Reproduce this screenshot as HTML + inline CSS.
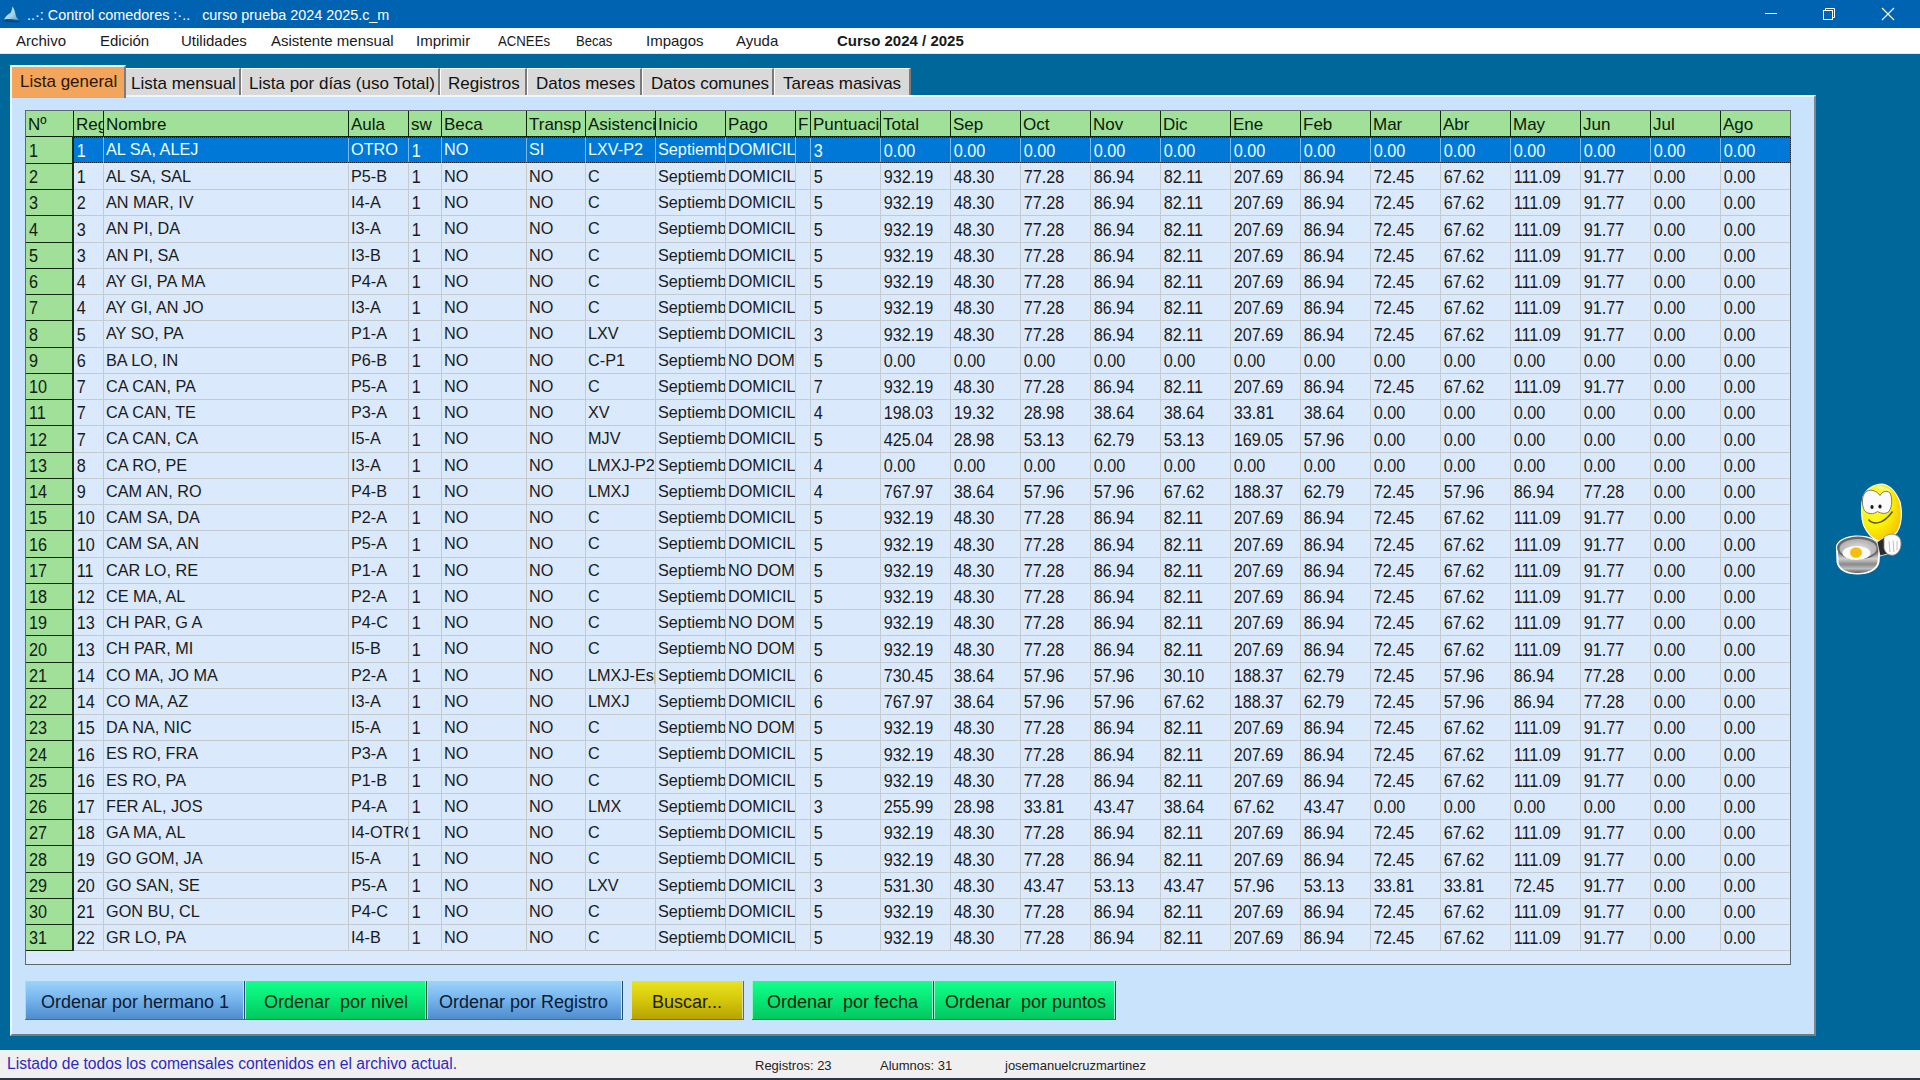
<!DOCTYPE html>
<html><head><meta charset="utf-8">
<style>
html,body{margin:0;padding:0;}
body{width:1920px;height:1080px;overflow:hidden;position:relative;background:#00679B;font-family:"Liberation Sans",sans-serif;}
div{position:absolute;box-sizing:border-box;}
#title{left:0;top:0;width:1920px;height:28px;background:#0063B1;}
#title .t{left:27px;top:5.6px;font-size:14.4px;color:#fff;white-space:pre;line-height:18px;}
#menu{left:0;top:28px;width:1920px;height:26px;background:#fff;border-bottom:1px solid #e6e6e6;}
.mi{top:4px;font-size:15px;line-height:17px;color:#1a1a1a;white-space:pre;}
#panel{left:10px;top:95px;width:1806px;height:941px;background:#C9E3FC;border-left:2px solid #eef6fd;border-top:2px solid #eef6fd;border-right:2px solid #7b8790;border-bottom:2px solid #707c86;}
.tab{top:68px;height:27px;background:#D9D9D9;border-top:1px solid #fff;border-left:1px solid #fff;border-right:2px solid #7a7a7a;font-size:17px;line-height:29px;color:#111;white-space:pre;}
.tabsel{left:10px;top:65px;width:116px;height:33px;background:#F3A65B;border-top:2px solid #eaf4fc;border-left:2px solid #eaf4fc;border-right:2px solid #7c7c7c;font-size:17px;color:#2a1500;white-space:pre;}
#grid{left:25px;top:110px;width:1766px;height:855px;background:#DAE9FB;border:1px solid #5f6a70;}
.hdr{background:#A0E098;}
.ht{font-size:17px;color:#0a1a0a;padding-left:2px;padding-top:1px;overflow:hidden;white-space:nowrap;}
.hv{width:1px;background:#0f2a10;}
.hl{height:1px;background:#0d1f0d;}
.fc{left:26px;width:47px;background:#A0E098;font-size:17px;color:#102010;padding-left:3px;white-space:nowrap;}
.fl{left:26px;width:47px;height:1px;background:#142a14;}
.fv{width:2px;background:#1b2e1b;}
.gl{left:74px;width:1716px;height:1px;background:#C5CACF;}
.gv{width:1px;background:#C5CACF;}
.bv{width:1px;background:#5f6a70;}
.sv{width:1px;background:#7DB8EE;}
.selbg{left:74px;width:1716px;background:#0078D7;}
.c{font-size:17px;color:#1b1b1b;padding-left:2px;overflow:hidden;white-space:nowrap;}
.c.s{color:#eaffff;}
.tx{display:inline-block;transform:scaleX(0.955);transform-origin:0 0;}
.c.n{font-size:18px;transform:scaleX(0.9);transform-origin:0 0;padding-left:3px;padding-top:1px;}
.fn{display:inline-block;font-size:18px;transform:scaleX(0.9);transform-origin:0 0;position:relative;top:1px;}
.focus{border:1px dotted #1a1a1a;}
.btn{top:981px;height:39px;font-size:18px;line-height:43px;white-space:pre;color:#0b1a33;}
.bb{background:linear-gradient(#9dd3fc,#74b3ec 50%,#4f8ccd);border-right:1px solid #1f4e6e;border-bottom:1px solid #3f6f9c;box-shadow:inset -1px 0 #bfe6ff,inset 1px 0 #a9d8fb;}
.bg{background:linear-gradient(#14ff8c,#08ea78 45%,#04c75e);border-right:1px solid #1c5a3c;border-bottom:1px solid #0a9a48;box-shadow:inset -1px 0 #9dffd2,inset 1px 0 #8ff8c4;color:#052a10;}
.by{background:linear-gradient(#e9e31e,#d5c80c 50%,#b5a302);border-right:1px solid #6f6a40;border-bottom:1px solid #8a7a00;box-shadow:inset -1px 0 #dcdca8,inset 1px 0 #f0ea70;color:#1e1c00;}
#status{left:0;top:1050px;width:1920px;height:28px;background:#F0F0F0;}
#sbot{left:0;top:1078px;width:1920px;height:2px;background:#2a3641;}
.st{top:1055px;font-size:16px;line-height:18px;white-space:pre;transform:scaleX(0.977);transform-origin:0 0;}
.st2{top:1058px;font-size:13px;line-height:16px;white-space:pre;color:#222;}
</style></head><body>
<div id="title">
  <svg style="position:absolute;left:0;top:0" width="28" height="28" viewBox="0 0 28 28">
    <defs><linearGradient id="ig" x1="0" y1="0" x2="1" y2="1"><stop offset="0" stop-color="#d8f0fa"/><stop offset="0.55" stop-color="#a6d4e8"/><stop offset="1" stop-color="#5e9cb8"/></linearGradient></defs>
    <path d="M4 20 C5.5 21 12 21.5 19.5 21.5" stroke="#0a3f78" stroke-width="1.6" fill="none" opacity="0.8"/>
    <path d="M4 19.5 C5.5 16 8 14.2 10.5 13 C11.8 11 12 8.5 12.5 6.5 C14.2 8.2 15 12 15.8 15.5 C16.6 18 18 19.5 19.5 20.5 C15 19.2 9.5 18.6 4 19.5 Z" fill="url(#ig)"/>
  </svg>
  <div class="t">..·: Control comedores :·..   curso prueba 2024 2025.c_m</div>
  <svg style="position:absolute;left:1760px;top:0" width="160" height="28" viewBox="0 0 160 28">
    <rect x="5" y="13" width="12" height="1" fill="#fff"/>
    <rect x="63.5" y="10.5" width="9" height="9" fill="none" stroke="#fff" stroke-width="1"/>
    <path d="M65.5 10.5 V8.5 H74.5 V17.5 H72.5" fill="none" stroke="#fff" stroke-width="1"/>
    <path d="M122 8 L134 20 M134 8 L122 20" stroke="#fff" stroke-width="1.1"/>
  </svg>
</div>
<div id="menu">
  <div class="mi" style="left:16px">Archivo</div>
  <div class="mi" style="left:100px">Edición</div>
  <div class="mi" style="left:181px">Utilidades</div>
  <div class="mi" style="left:271px">Asistente mensual</div>
  <div class="mi" style="left:416px">Imprimir</div>
  <div class="mi" style="left:498px;transform:scaleX(0.88);transform-origin:0 0">ACNEEs</div>
  <div class="mi" style="left:576px;transform:scaleX(0.87);transform-origin:0 0">Becas</div>
  <div class="mi" style="left:646px">Impagos</div>
  <div class="mi" style="left:736px">Ayuda</div>
  <div class="mi" style="left:837px;font-weight:bold">Curso 2024 / 2025</div>
</div>
<div id="panel"></div>
<div class="tab" style="left:125px;width:116px"><span style="position:absolute;left:5px;top:0">Lista mensual</span></div>
<div class="tab" style="left:241px;width:199px"><span style="position:absolute;left:7px;top:0">Lista por días (uso Total)</span></div>
<div class="tab" style="left:440px;width:87px"><span style="position:absolute;left:7px;top:0">Registros</span></div>
<div class="tab" style="left:527px;width:115px"><span style="position:absolute;left:8px;top:0">Datos meses</span></div>
<div class="tab" style="left:642px;width:132px"><span style="position:absolute;left:8px;top:0">Datos comunes</span></div>
<div class="tab" style="left:774px;width:137px"><span style="position:absolute;left:8px;top:0">Tareas masivas</span></div>
<div class="tabsel"><span style="position:absolute;left:8px;top:3px;line-height:24px">Lista general</span></div>
<div id="grid"></div>
<div class="hdr" style="top:111px;height:25px;left:26px;width:1764px"></div>
<div class="ht" style="left:26px;top:111px;width:47px;height:25px;line-height:25px">Nº</div>
<div class="ht" style="left:74px;top:111px;width:29px;height:25px;line-height:25px">Registro</div>
<div class="hv" style="left:73px;top:111px;height:26px"></div>
<div class="ht" style="left:104px;top:111px;width:244px;height:25px;line-height:25px">Nombre</div>
<div class="hv" style="left:103px;top:111px;height:26px"></div>
<div class="ht" style="left:349px;top:111px;width:59px;height:25px;line-height:25px">Aula</div>
<div class="hv" style="left:348px;top:111px;height:26px"></div>
<div class="ht" style="left:409px;top:111px;width:32px;height:25px;line-height:25px">sw</div>
<div class="hv" style="left:408px;top:111px;height:26px"></div>
<div class="ht" style="left:442px;top:111px;width:84px;height:25px;line-height:25px">Beca</div>
<div class="hv" style="left:441px;top:111px;height:26px"></div>
<div class="ht" style="left:527px;top:111px;width:58px;height:25px;line-height:25px">Transp</div>
<div class="hv" style="left:526px;top:111px;height:26px"></div>
<div class="ht" style="left:586px;top:111px;width:69px;height:25px;line-height:25px">Asistencia</div>
<div class="hv" style="left:585px;top:111px;height:26px"></div>
<div class="ht" style="left:656px;top:111px;width:69px;height:25px;line-height:25px">Inicio</div>
<div class="hv" style="left:655px;top:111px;height:26px"></div>
<div class="ht" style="left:726px;top:111px;width:69px;height:25px;line-height:25px">Pago</div>
<div class="hv" style="left:725px;top:111px;height:26px"></div>
<div class="ht" style="left:796px;top:111px;width:14px;height:25px;line-height:25px">F</div>
<div class="hv" style="left:795px;top:111px;height:26px"></div>
<div class="ht" style="left:811px;top:111px;width:69px;height:25px;line-height:25px">Puntuacion</div>
<div class="hv" style="left:810px;top:111px;height:26px"></div>
<div class="ht" style="left:881px;top:111px;width:69px;height:25px;line-height:25px">Total</div>
<div class="hv" style="left:880px;top:111px;height:26px"></div>
<div class="ht" style="left:951px;top:111px;width:69px;height:25px;line-height:25px">Sep</div>
<div class="hv" style="left:950px;top:111px;height:26px"></div>
<div class="ht" style="left:1021px;top:111px;width:69px;height:25px;line-height:25px">Oct</div>
<div class="hv" style="left:1020px;top:111px;height:26px"></div>
<div class="ht" style="left:1091px;top:111px;width:69px;height:25px;line-height:25px">Nov</div>
<div class="hv" style="left:1090px;top:111px;height:26px"></div>
<div class="ht" style="left:1161px;top:111px;width:69px;height:25px;line-height:25px">Dic</div>
<div class="hv" style="left:1160px;top:111px;height:26px"></div>
<div class="ht" style="left:1231px;top:111px;width:69px;height:25px;line-height:25px">Ene</div>
<div class="hv" style="left:1230px;top:111px;height:26px"></div>
<div class="ht" style="left:1301px;top:111px;width:69px;height:25px;line-height:25px">Feb</div>
<div class="hv" style="left:1300px;top:111px;height:26px"></div>
<div class="ht" style="left:1371px;top:111px;width:69px;height:25px;line-height:25px">Mar</div>
<div class="hv" style="left:1370px;top:111px;height:26px"></div>
<div class="ht" style="left:1441px;top:111px;width:69px;height:25px;line-height:25px">Abr</div>
<div class="hv" style="left:1440px;top:111px;height:26px"></div>
<div class="ht" style="left:1511px;top:111px;width:69px;height:25px;line-height:25px">May</div>
<div class="hv" style="left:1510px;top:111px;height:26px"></div>
<div class="ht" style="left:1581px;top:111px;width:69px;height:25px;line-height:25px">Jun</div>
<div class="hv" style="left:1580px;top:111px;height:26px"></div>
<div class="ht" style="left:1651px;top:111px;width:69px;height:25px;line-height:25px">Jul</div>
<div class="hv" style="left:1650px;top:111px;height:26px"></div>
<div class="ht" style="left:1721px;top:111px;width:69px;height:25px;line-height:25px">Ago</div>
<div class="hv" style="left:1720px;top:111px;height:26px"></div>
<div class="hl" style="left:26px;top:136px;width:1764px"></div>
<div class="fc" style="top:137px;height:26px;line-height:26px"><span class="fn">1</span></div>
<div class="fl" style="top:163px"></div>
<div class="selbg" style="top:137px;height:26px"></div>
<div class="c s n" style="left:74px;top:137px;width:29px;height:26px;line-height:26px">1</div>
<div class="c s" style="left:104px;top:137px;width:244px;height:26px;line-height:26px"><span class="tx">AL SA, ALEJ</span></div>
<div class="c s" style="left:349px;top:137px;width:59px;height:26px;line-height:26px"><span class="tx">OTRO</span></div>
<div class="c s n" style="left:409px;top:137px;width:32px;height:26px;line-height:26px">1</div>
<div class="c s" style="left:442px;top:137px;width:84px;height:26px;line-height:26px"><span class="tx">NO</span></div>
<div class="c s" style="left:527px;top:137px;width:58px;height:26px;line-height:26px"><span class="tx">SI</span></div>
<div class="c s" style="left:586px;top:137px;width:69px;height:26px;line-height:26px"><span class="tx">LXV-P2</span></div>
<div class="c s" style="left:656px;top:137px;width:69px;height:26px;line-height:26px"><span class="tx">Septiembre</span></div>
<div class="c s" style="left:726px;top:137px;width:69px;height:26px;line-height:26px"><span class="tx">DOMICILIADO</span></div>
<div class="c s n" style="left:811px;top:137px;width:69px;height:26px;line-height:26px">3</div>
<div class="c s n" style="left:881px;top:137px;width:69px;height:26px;line-height:26px">0.00</div>
<div class="c s n" style="left:951px;top:137px;width:69px;height:26px;line-height:26px">0.00</div>
<div class="c s n" style="left:1021px;top:137px;width:69px;height:26px;line-height:26px">0.00</div>
<div class="c s n" style="left:1091px;top:137px;width:69px;height:26px;line-height:26px">0.00</div>
<div class="c s n" style="left:1161px;top:137px;width:69px;height:26px;line-height:26px">0.00</div>
<div class="c s n" style="left:1231px;top:137px;width:69px;height:26px;line-height:26px">0.00</div>
<div class="c s n" style="left:1301px;top:137px;width:69px;height:26px;line-height:26px">0.00</div>
<div class="c s n" style="left:1371px;top:137px;width:69px;height:26px;line-height:26px">0.00</div>
<div class="c s n" style="left:1441px;top:137px;width:69px;height:26px;line-height:26px">0.00</div>
<div class="c s n" style="left:1511px;top:137px;width:69px;height:26px;line-height:26px">0.00</div>
<div class="c s n" style="left:1581px;top:137px;width:69px;height:26px;line-height:26px">0.00</div>
<div class="c s n" style="left:1651px;top:137px;width:69px;height:26px;line-height:26px">0.00</div>
<div class="c s n" style="left:1721px;top:137px;width:69px;height:26px;line-height:26px">0.00</div>
<div class="fc" style="top:164px;height:25px;line-height:25px"><span class="fn">2</span></div>
<div class="fl" style="top:189px"></div>
<div class="gl" style="top:189px"></div>
<div class="c n" style="left:74px;top:164px;width:29px;height:25px;line-height:25px">1</div>
<div class="c" style="left:104px;top:164px;width:244px;height:25px;line-height:25px"><span class="tx">AL SA, SAL</span></div>
<div class="c" style="left:349px;top:164px;width:59px;height:25px;line-height:25px"><span class="tx">P5-B</span></div>
<div class="c n" style="left:409px;top:164px;width:32px;height:25px;line-height:25px">1</div>
<div class="c" style="left:442px;top:164px;width:84px;height:25px;line-height:25px"><span class="tx">NO</span></div>
<div class="c" style="left:527px;top:164px;width:58px;height:25px;line-height:25px"><span class="tx">NO</span></div>
<div class="c" style="left:586px;top:164px;width:69px;height:25px;line-height:25px"><span class="tx">C</span></div>
<div class="c" style="left:656px;top:164px;width:69px;height:25px;line-height:25px"><span class="tx">Septiembre</span></div>
<div class="c" style="left:726px;top:164px;width:69px;height:25px;line-height:25px"><span class="tx">DOMICILIADO</span></div>
<div class="c n" style="left:811px;top:164px;width:69px;height:25px;line-height:25px">5</div>
<div class="c n" style="left:881px;top:164px;width:69px;height:25px;line-height:25px">932.19</div>
<div class="c n" style="left:951px;top:164px;width:69px;height:25px;line-height:25px">48.30</div>
<div class="c n" style="left:1021px;top:164px;width:69px;height:25px;line-height:25px">77.28</div>
<div class="c n" style="left:1091px;top:164px;width:69px;height:25px;line-height:25px">86.94</div>
<div class="c n" style="left:1161px;top:164px;width:69px;height:25px;line-height:25px">82.11</div>
<div class="c n" style="left:1231px;top:164px;width:69px;height:25px;line-height:25px">207.69</div>
<div class="c n" style="left:1301px;top:164px;width:69px;height:25px;line-height:25px">86.94</div>
<div class="c n" style="left:1371px;top:164px;width:69px;height:25px;line-height:25px">72.45</div>
<div class="c n" style="left:1441px;top:164px;width:69px;height:25px;line-height:25px">67.62</div>
<div class="c n" style="left:1511px;top:164px;width:69px;height:25px;line-height:25px">111.09</div>
<div class="c n" style="left:1581px;top:164px;width:69px;height:25px;line-height:25px">91.77</div>
<div class="c n" style="left:1651px;top:164px;width:69px;height:25px;line-height:25px">0.00</div>
<div class="c n" style="left:1721px;top:164px;width:69px;height:25px;line-height:25px">0.00</div>
<div class="fc" style="top:190px;height:25px;line-height:25px"><span class="fn">3</span></div>
<div class="fl" style="top:215px"></div>
<div class="gl" style="top:215px"></div>
<div class="c n" style="left:74px;top:190px;width:29px;height:25px;line-height:25px">2</div>
<div class="c" style="left:104px;top:190px;width:244px;height:25px;line-height:25px"><span class="tx">AN MAR, IV</span></div>
<div class="c" style="left:349px;top:190px;width:59px;height:25px;line-height:25px"><span class="tx">I4-A</span></div>
<div class="c n" style="left:409px;top:190px;width:32px;height:25px;line-height:25px">1</div>
<div class="c" style="left:442px;top:190px;width:84px;height:25px;line-height:25px"><span class="tx">NO</span></div>
<div class="c" style="left:527px;top:190px;width:58px;height:25px;line-height:25px"><span class="tx">NO</span></div>
<div class="c" style="left:586px;top:190px;width:69px;height:25px;line-height:25px"><span class="tx">C</span></div>
<div class="c" style="left:656px;top:190px;width:69px;height:25px;line-height:25px"><span class="tx">Septiembre</span></div>
<div class="c" style="left:726px;top:190px;width:69px;height:25px;line-height:25px"><span class="tx">DOMICILIADO</span></div>
<div class="c n" style="left:811px;top:190px;width:69px;height:25px;line-height:25px">5</div>
<div class="c n" style="left:881px;top:190px;width:69px;height:25px;line-height:25px">932.19</div>
<div class="c n" style="left:951px;top:190px;width:69px;height:25px;line-height:25px">48.30</div>
<div class="c n" style="left:1021px;top:190px;width:69px;height:25px;line-height:25px">77.28</div>
<div class="c n" style="left:1091px;top:190px;width:69px;height:25px;line-height:25px">86.94</div>
<div class="c n" style="left:1161px;top:190px;width:69px;height:25px;line-height:25px">82.11</div>
<div class="c n" style="left:1231px;top:190px;width:69px;height:25px;line-height:25px">207.69</div>
<div class="c n" style="left:1301px;top:190px;width:69px;height:25px;line-height:25px">86.94</div>
<div class="c n" style="left:1371px;top:190px;width:69px;height:25px;line-height:25px">72.45</div>
<div class="c n" style="left:1441px;top:190px;width:69px;height:25px;line-height:25px">67.62</div>
<div class="c n" style="left:1511px;top:190px;width:69px;height:25px;line-height:25px">111.09</div>
<div class="c n" style="left:1581px;top:190px;width:69px;height:25px;line-height:25px">91.77</div>
<div class="c n" style="left:1651px;top:190px;width:69px;height:25px;line-height:25px">0.00</div>
<div class="c n" style="left:1721px;top:190px;width:69px;height:25px;line-height:25px">0.00</div>
<div class="fc" style="top:216px;height:26px;line-height:26px"><span class="fn">4</span></div>
<div class="fl" style="top:242px"></div>
<div class="gl" style="top:242px"></div>
<div class="c n" style="left:74px;top:216px;width:29px;height:26px;line-height:26px">3</div>
<div class="c" style="left:104px;top:216px;width:244px;height:26px;line-height:26px"><span class="tx">AN PI, DA</span></div>
<div class="c" style="left:349px;top:216px;width:59px;height:26px;line-height:26px"><span class="tx">I3-A</span></div>
<div class="c n" style="left:409px;top:216px;width:32px;height:26px;line-height:26px">1</div>
<div class="c" style="left:442px;top:216px;width:84px;height:26px;line-height:26px"><span class="tx">NO</span></div>
<div class="c" style="left:527px;top:216px;width:58px;height:26px;line-height:26px"><span class="tx">NO</span></div>
<div class="c" style="left:586px;top:216px;width:69px;height:26px;line-height:26px"><span class="tx">C</span></div>
<div class="c" style="left:656px;top:216px;width:69px;height:26px;line-height:26px"><span class="tx">Septiembre</span></div>
<div class="c" style="left:726px;top:216px;width:69px;height:26px;line-height:26px"><span class="tx">DOMICILIADO</span></div>
<div class="c n" style="left:811px;top:216px;width:69px;height:26px;line-height:26px">5</div>
<div class="c n" style="left:881px;top:216px;width:69px;height:26px;line-height:26px">932.19</div>
<div class="c n" style="left:951px;top:216px;width:69px;height:26px;line-height:26px">48.30</div>
<div class="c n" style="left:1021px;top:216px;width:69px;height:26px;line-height:26px">77.28</div>
<div class="c n" style="left:1091px;top:216px;width:69px;height:26px;line-height:26px">86.94</div>
<div class="c n" style="left:1161px;top:216px;width:69px;height:26px;line-height:26px">82.11</div>
<div class="c n" style="left:1231px;top:216px;width:69px;height:26px;line-height:26px">207.69</div>
<div class="c n" style="left:1301px;top:216px;width:69px;height:26px;line-height:26px">86.94</div>
<div class="c n" style="left:1371px;top:216px;width:69px;height:26px;line-height:26px">72.45</div>
<div class="c n" style="left:1441px;top:216px;width:69px;height:26px;line-height:26px">67.62</div>
<div class="c n" style="left:1511px;top:216px;width:69px;height:26px;line-height:26px">111.09</div>
<div class="c n" style="left:1581px;top:216px;width:69px;height:26px;line-height:26px">91.77</div>
<div class="c n" style="left:1651px;top:216px;width:69px;height:26px;line-height:26px">0.00</div>
<div class="c n" style="left:1721px;top:216px;width:69px;height:26px;line-height:26px">0.00</div>
<div class="fc" style="top:243px;height:25px;line-height:25px"><span class="fn">5</span></div>
<div class="fl" style="top:268px"></div>
<div class="gl" style="top:268px"></div>
<div class="c n" style="left:74px;top:243px;width:29px;height:25px;line-height:25px">3</div>
<div class="c" style="left:104px;top:243px;width:244px;height:25px;line-height:25px"><span class="tx">AN PI, SA</span></div>
<div class="c" style="left:349px;top:243px;width:59px;height:25px;line-height:25px"><span class="tx">I3-B</span></div>
<div class="c n" style="left:409px;top:243px;width:32px;height:25px;line-height:25px">1</div>
<div class="c" style="left:442px;top:243px;width:84px;height:25px;line-height:25px"><span class="tx">NO</span></div>
<div class="c" style="left:527px;top:243px;width:58px;height:25px;line-height:25px"><span class="tx">NO</span></div>
<div class="c" style="left:586px;top:243px;width:69px;height:25px;line-height:25px"><span class="tx">C</span></div>
<div class="c" style="left:656px;top:243px;width:69px;height:25px;line-height:25px"><span class="tx">Septiembre</span></div>
<div class="c" style="left:726px;top:243px;width:69px;height:25px;line-height:25px"><span class="tx">DOMICILIADO</span></div>
<div class="c n" style="left:811px;top:243px;width:69px;height:25px;line-height:25px">5</div>
<div class="c n" style="left:881px;top:243px;width:69px;height:25px;line-height:25px">932.19</div>
<div class="c n" style="left:951px;top:243px;width:69px;height:25px;line-height:25px">48.30</div>
<div class="c n" style="left:1021px;top:243px;width:69px;height:25px;line-height:25px">77.28</div>
<div class="c n" style="left:1091px;top:243px;width:69px;height:25px;line-height:25px">86.94</div>
<div class="c n" style="left:1161px;top:243px;width:69px;height:25px;line-height:25px">82.11</div>
<div class="c n" style="left:1231px;top:243px;width:69px;height:25px;line-height:25px">207.69</div>
<div class="c n" style="left:1301px;top:243px;width:69px;height:25px;line-height:25px">86.94</div>
<div class="c n" style="left:1371px;top:243px;width:69px;height:25px;line-height:25px">72.45</div>
<div class="c n" style="left:1441px;top:243px;width:69px;height:25px;line-height:25px">67.62</div>
<div class="c n" style="left:1511px;top:243px;width:69px;height:25px;line-height:25px">111.09</div>
<div class="c n" style="left:1581px;top:243px;width:69px;height:25px;line-height:25px">91.77</div>
<div class="c n" style="left:1651px;top:243px;width:69px;height:25px;line-height:25px">0.00</div>
<div class="c n" style="left:1721px;top:243px;width:69px;height:25px;line-height:25px">0.00</div>
<div class="fc" style="top:269px;height:25px;line-height:25px"><span class="fn">6</span></div>
<div class="fl" style="top:294px"></div>
<div class="gl" style="top:294px"></div>
<div class="c n" style="left:74px;top:269px;width:29px;height:25px;line-height:25px">4</div>
<div class="c" style="left:104px;top:269px;width:244px;height:25px;line-height:25px"><span class="tx">AY GI, PA MA</span></div>
<div class="c" style="left:349px;top:269px;width:59px;height:25px;line-height:25px"><span class="tx">P4-A</span></div>
<div class="c n" style="left:409px;top:269px;width:32px;height:25px;line-height:25px">1</div>
<div class="c" style="left:442px;top:269px;width:84px;height:25px;line-height:25px"><span class="tx">NO</span></div>
<div class="c" style="left:527px;top:269px;width:58px;height:25px;line-height:25px"><span class="tx">NO</span></div>
<div class="c" style="left:586px;top:269px;width:69px;height:25px;line-height:25px"><span class="tx">C</span></div>
<div class="c" style="left:656px;top:269px;width:69px;height:25px;line-height:25px"><span class="tx">Septiembre</span></div>
<div class="c" style="left:726px;top:269px;width:69px;height:25px;line-height:25px"><span class="tx">DOMICILIADO</span></div>
<div class="c n" style="left:811px;top:269px;width:69px;height:25px;line-height:25px">5</div>
<div class="c n" style="left:881px;top:269px;width:69px;height:25px;line-height:25px">932.19</div>
<div class="c n" style="left:951px;top:269px;width:69px;height:25px;line-height:25px">48.30</div>
<div class="c n" style="left:1021px;top:269px;width:69px;height:25px;line-height:25px">77.28</div>
<div class="c n" style="left:1091px;top:269px;width:69px;height:25px;line-height:25px">86.94</div>
<div class="c n" style="left:1161px;top:269px;width:69px;height:25px;line-height:25px">82.11</div>
<div class="c n" style="left:1231px;top:269px;width:69px;height:25px;line-height:25px">207.69</div>
<div class="c n" style="left:1301px;top:269px;width:69px;height:25px;line-height:25px">86.94</div>
<div class="c n" style="left:1371px;top:269px;width:69px;height:25px;line-height:25px">72.45</div>
<div class="c n" style="left:1441px;top:269px;width:69px;height:25px;line-height:25px">67.62</div>
<div class="c n" style="left:1511px;top:269px;width:69px;height:25px;line-height:25px">111.09</div>
<div class="c n" style="left:1581px;top:269px;width:69px;height:25px;line-height:25px">91.77</div>
<div class="c n" style="left:1651px;top:269px;width:69px;height:25px;line-height:25px">0.00</div>
<div class="c n" style="left:1721px;top:269px;width:69px;height:25px;line-height:25px">0.00</div>
<div class="fc" style="top:295px;height:25px;line-height:25px"><span class="fn">7</span></div>
<div class="fl" style="top:320px"></div>
<div class="gl" style="top:320px"></div>
<div class="c n" style="left:74px;top:295px;width:29px;height:25px;line-height:25px">4</div>
<div class="c" style="left:104px;top:295px;width:244px;height:25px;line-height:25px"><span class="tx">AY GI, AN JO</span></div>
<div class="c" style="left:349px;top:295px;width:59px;height:25px;line-height:25px"><span class="tx">I3-A</span></div>
<div class="c n" style="left:409px;top:295px;width:32px;height:25px;line-height:25px">1</div>
<div class="c" style="left:442px;top:295px;width:84px;height:25px;line-height:25px"><span class="tx">NO</span></div>
<div class="c" style="left:527px;top:295px;width:58px;height:25px;line-height:25px"><span class="tx">NO</span></div>
<div class="c" style="left:586px;top:295px;width:69px;height:25px;line-height:25px"><span class="tx">C</span></div>
<div class="c" style="left:656px;top:295px;width:69px;height:25px;line-height:25px"><span class="tx">Septiembre</span></div>
<div class="c" style="left:726px;top:295px;width:69px;height:25px;line-height:25px"><span class="tx">DOMICILIADO</span></div>
<div class="c n" style="left:811px;top:295px;width:69px;height:25px;line-height:25px">5</div>
<div class="c n" style="left:881px;top:295px;width:69px;height:25px;line-height:25px">932.19</div>
<div class="c n" style="left:951px;top:295px;width:69px;height:25px;line-height:25px">48.30</div>
<div class="c n" style="left:1021px;top:295px;width:69px;height:25px;line-height:25px">77.28</div>
<div class="c n" style="left:1091px;top:295px;width:69px;height:25px;line-height:25px">86.94</div>
<div class="c n" style="left:1161px;top:295px;width:69px;height:25px;line-height:25px">82.11</div>
<div class="c n" style="left:1231px;top:295px;width:69px;height:25px;line-height:25px">207.69</div>
<div class="c n" style="left:1301px;top:295px;width:69px;height:25px;line-height:25px">86.94</div>
<div class="c n" style="left:1371px;top:295px;width:69px;height:25px;line-height:25px">72.45</div>
<div class="c n" style="left:1441px;top:295px;width:69px;height:25px;line-height:25px">67.62</div>
<div class="c n" style="left:1511px;top:295px;width:69px;height:25px;line-height:25px">111.09</div>
<div class="c n" style="left:1581px;top:295px;width:69px;height:25px;line-height:25px">91.77</div>
<div class="c n" style="left:1651px;top:295px;width:69px;height:25px;line-height:25px">0.00</div>
<div class="c n" style="left:1721px;top:295px;width:69px;height:25px;line-height:25px">0.00</div>
<div class="fc" style="top:321px;height:26px;line-height:26px"><span class="fn">8</span></div>
<div class="fl" style="top:347px"></div>
<div class="gl" style="top:347px"></div>
<div class="c n" style="left:74px;top:321px;width:29px;height:26px;line-height:26px">5</div>
<div class="c" style="left:104px;top:321px;width:244px;height:26px;line-height:26px"><span class="tx">AY SO, PA</span></div>
<div class="c" style="left:349px;top:321px;width:59px;height:26px;line-height:26px"><span class="tx">P1-A</span></div>
<div class="c n" style="left:409px;top:321px;width:32px;height:26px;line-height:26px">1</div>
<div class="c" style="left:442px;top:321px;width:84px;height:26px;line-height:26px"><span class="tx">NO</span></div>
<div class="c" style="left:527px;top:321px;width:58px;height:26px;line-height:26px"><span class="tx">NO</span></div>
<div class="c" style="left:586px;top:321px;width:69px;height:26px;line-height:26px"><span class="tx">LXV</span></div>
<div class="c" style="left:656px;top:321px;width:69px;height:26px;line-height:26px"><span class="tx">Septiembre</span></div>
<div class="c" style="left:726px;top:321px;width:69px;height:26px;line-height:26px"><span class="tx">DOMICILIADO</span></div>
<div class="c n" style="left:811px;top:321px;width:69px;height:26px;line-height:26px">3</div>
<div class="c n" style="left:881px;top:321px;width:69px;height:26px;line-height:26px">932.19</div>
<div class="c n" style="left:951px;top:321px;width:69px;height:26px;line-height:26px">48.30</div>
<div class="c n" style="left:1021px;top:321px;width:69px;height:26px;line-height:26px">77.28</div>
<div class="c n" style="left:1091px;top:321px;width:69px;height:26px;line-height:26px">86.94</div>
<div class="c n" style="left:1161px;top:321px;width:69px;height:26px;line-height:26px">82.11</div>
<div class="c n" style="left:1231px;top:321px;width:69px;height:26px;line-height:26px">207.69</div>
<div class="c n" style="left:1301px;top:321px;width:69px;height:26px;line-height:26px">86.94</div>
<div class="c n" style="left:1371px;top:321px;width:69px;height:26px;line-height:26px">72.45</div>
<div class="c n" style="left:1441px;top:321px;width:69px;height:26px;line-height:26px">67.62</div>
<div class="c n" style="left:1511px;top:321px;width:69px;height:26px;line-height:26px">111.09</div>
<div class="c n" style="left:1581px;top:321px;width:69px;height:26px;line-height:26px">91.77</div>
<div class="c n" style="left:1651px;top:321px;width:69px;height:26px;line-height:26px">0.00</div>
<div class="c n" style="left:1721px;top:321px;width:69px;height:26px;line-height:26px">0.00</div>
<div class="fc" style="top:348px;height:25px;line-height:25px"><span class="fn">9</span></div>
<div class="fl" style="top:373px"></div>
<div class="gl" style="top:373px"></div>
<div class="c n" style="left:74px;top:348px;width:29px;height:25px;line-height:25px">6</div>
<div class="c" style="left:104px;top:348px;width:244px;height:25px;line-height:25px"><span class="tx">BA LO, IN</span></div>
<div class="c" style="left:349px;top:348px;width:59px;height:25px;line-height:25px"><span class="tx">P6-B</span></div>
<div class="c n" style="left:409px;top:348px;width:32px;height:25px;line-height:25px">1</div>
<div class="c" style="left:442px;top:348px;width:84px;height:25px;line-height:25px"><span class="tx">NO</span></div>
<div class="c" style="left:527px;top:348px;width:58px;height:25px;line-height:25px"><span class="tx">NO</span></div>
<div class="c" style="left:586px;top:348px;width:69px;height:25px;line-height:25px"><span class="tx">C-P1</span></div>
<div class="c" style="left:656px;top:348px;width:69px;height:25px;line-height:25px"><span class="tx">Septiembre</span></div>
<div class="c" style="left:726px;top:348px;width:69px;height:25px;line-height:25px"><span class="tx">NO DOMICILIADO</span></div>
<div class="c n" style="left:811px;top:348px;width:69px;height:25px;line-height:25px">5</div>
<div class="c n" style="left:881px;top:348px;width:69px;height:25px;line-height:25px">0.00</div>
<div class="c n" style="left:951px;top:348px;width:69px;height:25px;line-height:25px">0.00</div>
<div class="c n" style="left:1021px;top:348px;width:69px;height:25px;line-height:25px">0.00</div>
<div class="c n" style="left:1091px;top:348px;width:69px;height:25px;line-height:25px">0.00</div>
<div class="c n" style="left:1161px;top:348px;width:69px;height:25px;line-height:25px">0.00</div>
<div class="c n" style="left:1231px;top:348px;width:69px;height:25px;line-height:25px">0.00</div>
<div class="c n" style="left:1301px;top:348px;width:69px;height:25px;line-height:25px">0.00</div>
<div class="c n" style="left:1371px;top:348px;width:69px;height:25px;line-height:25px">0.00</div>
<div class="c n" style="left:1441px;top:348px;width:69px;height:25px;line-height:25px">0.00</div>
<div class="c n" style="left:1511px;top:348px;width:69px;height:25px;line-height:25px">0.00</div>
<div class="c n" style="left:1581px;top:348px;width:69px;height:25px;line-height:25px">0.00</div>
<div class="c n" style="left:1651px;top:348px;width:69px;height:25px;line-height:25px">0.00</div>
<div class="c n" style="left:1721px;top:348px;width:69px;height:25px;line-height:25px">0.00</div>
<div class="fc" style="top:374px;height:25px;line-height:25px"><span class="fn">10</span></div>
<div class="fl" style="top:399px"></div>
<div class="gl" style="top:399px"></div>
<div class="c n" style="left:74px;top:374px;width:29px;height:25px;line-height:25px">7</div>
<div class="c" style="left:104px;top:374px;width:244px;height:25px;line-height:25px"><span class="tx">CA CAN, PA</span></div>
<div class="c" style="left:349px;top:374px;width:59px;height:25px;line-height:25px"><span class="tx">P5-A</span></div>
<div class="c n" style="left:409px;top:374px;width:32px;height:25px;line-height:25px">1</div>
<div class="c" style="left:442px;top:374px;width:84px;height:25px;line-height:25px"><span class="tx">NO</span></div>
<div class="c" style="left:527px;top:374px;width:58px;height:25px;line-height:25px"><span class="tx">NO</span></div>
<div class="c" style="left:586px;top:374px;width:69px;height:25px;line-height:25px"><span class="tx">C</span></div>
<div class="c" style="left:656px;top:374px;width:69px;height:25px;line-height:25px"><span class="tx">Septiembre</span></div>
<div class="c" style="left:726px;top:374px;width:69px;height:25px;line-height:25px"><span class="tx">DOMICILIADO</span></div>
<div class="c n" style="left:811px;top:374px;width:69px;height:25px;line-height:25px">7</div>
<div class="c n" style="left:881px;top:374px;width:69px;height:25px;line-height:25px">932.19</div>
<div class="c n" style="left:951px;top:374px;width:69px;height:25px;line-height:25px">48.30</div>
<div class="c n" style="left:1021px;top:374px;width:69px;height:25px;line-height:25px">77.28</div>
<div class="c n" style="left:1091px;top:374px;width:69px;height:25px;line-height:25px">86.94</div>
<div class="c n" style="left:1161px;top:374px;width:69px;height:25px;line-height:25px">82.11</div>
<div class="c n" style="left:1231px;top:374px;width:69px;height:25px;line-height:25px">207.69</div>
<div class="c n" style="left:1301px;top:374px;width:69px;height:25px;line-height:25px">86.94</div>
<div class="c n" style="left:1371px;top:374px;width:69px;height:25px;line-height:25px">72.45</div>
<div class="c n" style="left:1441px;top:374px;width:69px;height:25px;line-height:25px">67.62</div>
<div class="c n" style="left:1511px;top:374px;width:69px;height:25px;line-height:25px">111.09</div>
<div class="c n" style="left:1581px;top:374px;width:69px;height:25px;line-height:25px">91.77</div>
<div class="c n" style="left:1651px;top:374px;width:69px;height:25px;line-height:25px">0.00</div>
<div class="c n" style="left:1721px;top:374px;width:69px;height:25px;line-height:25px">0.00</div>
<div class="fc" style="top:400px;height:25px;line-height:25px"><span class="fn">11</span></div>
<div class="fl" style="top:425px"></div>
<div class="gl" style="top:425px"></div>
<div class="c n" style="left:74px;top:400px;width:29px;height:25px;line-height:25px">7</div>
<div class="c" style="left:104px;top:400px;width:244px;height:25px;line-height:25px"><span class="tx">CA CAN, TE</span></div>
<div class="c" style="left:349px;top:400px;width:59px;height:25px;line-height:25px"><span class="tx">P3-A</span></div>
<div class="c n" style="left:409px;top:400px;width:32px;height:25px;line-height:25px">1</div>
<div class="c" style="left:442px;top:400px;width:84px;height:25px;line-height:25px"><span class="tx">NO</span></div>
<div class="c" style="left:527px;top:400px;width:58px;height:25px;line-height:25px"><span class="tx">NO</span></div>
<div class="c" style="left:586px;top:400px;width:69px;height:25px;line-height:25px"><span class="tx">XV</span></div>
<div class="c" style="left:656px;top:400px;width:69px;height:25px;line-height:25px"><span class="tx">Septiembre</span></div>
<div class="c" style="left:726px;top:400px;width:69px;height:25px;line-height:25px"><span class="tx">DOMICILIADO</span></div>
<div class="c n" style="left:811px;top:400px;width:69px;height:25px;line-height:25px">4</div>
<div class="c n" style="left:881px;top:400px;width:69px;height:25px;line-height:25px">198.03</div>
<div class="c n" style="left:951px;top:400px;width:69px;height:25px;line-height:25px">19.32</div>
<div class="c n" style="left:1021px;top:400px;width:69px;height:25px;line-height:25px">28.98</div>
<div class="c n" style="left:1091px;top:400px;width:69px;height:25px;line-height:25px">38.64</div>
<div class="c n" style="left:1161px;top:400px;width:69px;height:25px;line-height:25px">38.64</div>
<div class="c n" style="left:1231px;top:400px;width:69px;height:25px;line-height:25px">33.81</div>
<div class="c n" style="left:1301px;top:400px;width:69px;height:25px;line-height:25px">38.64</div>
<div class="c n" style="left:1371px;top:400px;width:69px;height:25px;line-height:25px">0.00</div>
<div class="c n" style="left:1441px;top:400px;width:69px;height:25px;line-height:25px">0.00</div>
<div class="c n" style="left:1511px;top:400px;width:69px;height:25px;line-height:25px">0.00</div>
<div class="c n" style="left:1581px;top:400px;width:69px;height:25px;line-height:25px">0.00</div>
<div class="c n" style="left:1651px;top:400px;width:69px;height:25px;line-height:25px">0.00</div>
<div class="c n" style="left:1721px;top:400px;width:69px;height:25px;line-height:25px">0.00</div>
<div class="fc" style="top:426px;height:26px;line-height:26px"><span class="fn">12</span></div>
<div class="fl" style="top:452px"></div>
<div class="gl" style="top:452px"></div>
<div class="c n" style="left:74px;top:426px;width:29px;height:26px;line-height:26px">7</div>
<div class="c" style="left:104px;top:426px;width:244px;height:26px;line-height:26px"><span class="tx">CA CAN, CA</span></div>
<div class="c" style="left:349px;top:426px;width:59px;height:26px;line-height:26px"><span class="tx">I5-A</span></div>
<div class="c n" style="left:409px;top:426px;width:32px;height:26px;line-height:26px">1</div>
<div class="c" style="left:442px;top:426px;width:84px;height:26px;line-height:26px"><span class="tx">NO</span></div>
<div class="c" style="left:527px;top:426px;width:58px;height:26px;line-height:26px"><span class="tx">NO</span></div>
<div class="c" style="left:586px;top:426px;width:69px;height:26px;line-height:26px"><span class="tx">MJV</span></div>
<div class="c" style="left:656px;top:426px;width:69px;height:26px;line-height:26px"><span class="tx">Septiembre</span></div>
<div class="c" style="left:726px;top:426px;width:69px;height:26px;line-height:26px"><span class="tx">DOMICILIADO</span></div>
<div class="c n" style="left:811px;top:426px;width:69px;height:26px;line-height:26px">5</div>
<div class="c n" style="left:881px;top:426px;width:69px;height:26px;line-height:26px">425.04</div>
<div class="c n" style="left:951px;top:426px;width:69px;height:26px;line-height:26px">28.98</div>
<div class="c n" style="left:1021px;top:426px;width:69px;height:26px;line-height:26px">53.13</div>
<div class="c n" style="left:1091px;top:426px;width:69px;height:26px;line-height:26px">62.79</div>
<div class="c n" style="left:1161px;top:426px;width:69px;height:26px;line-height:26px">53.13</div>
<div class="c n" style="left:1231px;top:426px;width:69px;height:26px;line-height:26px">169.05</div>
<div class="c n" style="left:1301px;top:426px;width:69px;height:26px;line-height:26px">57.96</div>
<div class="c n" style="left:1371px;top:426px;width:69px;height:26px;line-height:26px">0.00</div>
<div class="c n" style="left:1441px;top:426px;width:69px;height:26px;line-height:26px">0.00</div>
<div class="c n" style="left:1511px;top:426px;width:69px;height:26px;line-height:26px">0.00</div>
<div class="c n" style="left:1581px;top:426px;width:69px;height:26px;line-height:26px">0.00</div>
<div class="c n" style="left:1651px;top:426px;width:69px;height:26px;line-height:26px">0.00</div>
<div class="c n" style="left:1721px;top:426px;width:69px;height:26px;line-height:26px">0.00</div>
<div class="fc" style="top:453px;height:25px;line-height:25px"><span class="fn">13</span></div>
<div class="fl" style="top:478px"></div>
<div class="gl" style="top:478px"></div>
<div class="c n" style="left:74px;top:453px;width:29px;height:25px;line-height:25px">8</div>
<div class="c" style="left:104px;top:453px;width:244px;height:25px;line-height:25px"><span class="tx">CA RO, PE</span></div>
<div class="c" style="left:349px;top:453px;width:59px;height:25px;line-height:25px"><span class="tx">I3-A</span></div>
<div class="c n" style="left:409px;top:453px;width:32px;height:25px;line-height:25px">1</div>
<div class="c" style="left:442px;top:453px;width:84px;height:25px;line-height:25px"><span class="tx">NO</span></div>
<div class="c" style="left:527px;top:453px;width:58px;height:25px;line-height:25px"><span class="tx">NO</span></div>
<div class="c" style="left:586px;top:453px;width:69px;height:25px;line-height:25px"><span class="tx">LMXJ-P2</span></div>
<div class="c" style="left:656px;top:453px;width:69px;height:25px;line-height:25px"><span class="tx">Septiembre</span></div>
<div class="c" style="left:726px;top:453px;width:69px;height:25px;line-height:25px"><span class="tx">DOMICILIADO</span></div>
<div class="c n" style="left:811px;top:453px;width:69px;height:25px;line-height:25px">4</div>
<div class="c n" style="left:881px;top:453px;width:69px;height:25px;line-height:25px">0.00</div>
<div class="c n" style="left:951px;top:453px;width:69px;height:25px;line-height:25px">0.00</div>
<div class="c n" style="left:1021px;top:453px;width:69px;height:25px;line-height:25px">0.00</div>
<div class="c n" style="left:1091px;top:453px;width:69px;height:25px;line-height:25px">0.00</div>
<div class="c n" style="left:1161px;top:453px;width:69px;height:25px;line-height:25px">0.00</div>
<div class="c n" style="left:1231px;top:453px;width:69px;height:25px;line-height:25px">0.00</div>
<div class="c n" style="left:1301px;top:453px;width:69px;height:25px;line-height:25px">0.00</div>
<div class="c n" style="left:1371px;top:453px;width:69px;height:25px;line-height:25px">0.00</div>
<div class="c n" style="left:1441px;top:453px;width:69px;height:25px;line-height:25px">0.00</div>
<div class="c n" style="left:1511px;top:453px;width:69px;height:25px;line-height:25px">0.00</div>
<div class="c n" style="left:1581px;top:453px;width:69px;height:25px;line-height:25px">0.00</div>
<div class="c n" style="left:1651px;top:453px;width:69px;height:25px;line-height:25px">0.00</div>
<div class="c n" style="left:1721px;top:453px;width:69px;height:25px;line-height:25px">0.00</div>
<div class="fc" style="top:479px;height:25px;line-height:25px"><span class="fn">14</span></div>
<div class="fl" style="top:504px"></div>
<div class="gl" style="top:504px"></div>
<div class="c n" style="left:74px;top:479px;width:29px;height:25px;line-height:25px">9</div>
<div class="c" style="left:104px;top:479px;width:244px;height:25px;line-height:25px"><span class="tx">CAM AN, RO</span></div>
<div class="c" style="left:349px;top:479px;width:59px;height:25px;line-height:25px"><span class="tx">P4-B</span></div>
<div class="c n" style="left:409px;top:479px;width:32px;height:25px;line-height:25px">1</div>
<div class="c" style="left:442px;top:479px;width:84px;height:25px;line-height:25px"><span class="tx">NO</span></div>
<div class="c" style="left:527px;top:479px;width:58px;height:25px;line-height:25px"><span class="tx">NO</span></div>
<div class="c" style="left:586px;top:479px;width:69px;height:25px;line-height:25px"><span class="tx">LMXJ</span></div>
<div class="c" style="left:656px;top:479px;width:69px;height:25px;line-height:25px"><span class="tx">Septiembre</span></div>
<div class="c" style="left:726px;top:479px;width:69px;height:25px;line-height:25px"><span class="tx">DOMICILIADO</span></div>
<div class="c n" style="left:811px;top:479px;width:69px;height:25px;line-height:25px">4</div>
<div class="c n" style="left:881px;top:479px;width:69px;height:25px;line-height:25px">767.97</div>
<div class="c n" style="left:951px;top:479px;width:69px;height:25px;line-height:25px">38.64</div>
<div class="c n" style="left:1021px;top:479px;width:69px;height:25px;line-height:25px">57.96</div>
<div class="c n" style="left:1091px;top:479px;width:69px;height:25px;line-height:25px">57.96</div>
<div class="c n" style="left:1161px;top:479px;width:69px;height:25px;line-height:25px">67.62</div>
<div class="c n" style="left:1231px;top:479px;width:69px;height:25px;line-height:25px">188.37</div>
<div class="c n" style="left:1301px;top:479px;width:69px;height:25px;line-height:25px">62.79</div>
<div class="c n" style="left:1371px;top:479px;width:69px;height:25px;line-height:25px">72.45</div>
<div class="c n" style="left:1441px;top:479px;width:69px;height:25px;line-height:25px">57.96</div>
<div class="c n" style="left:1511px;top:479px;width:69px;height:25px;line-height:25px">86.94</div>
<div class="c n" style="left:1581px;top:479px;width:69px;height:25px;line-height:25px">77.28</div>
<div class="c n" style="left:1651px;top:479px;width:69px;height:25px;line-height:25px">0.00</div>
<div class="c n" style="left:1721px;top:479px;width:69px;height:25px;line-height:25px">0.00</div>
<div class="fc" style="top:505px;height:25px;line-height:25px"><span class="fn">15</span></div>
<div class="fl" style="top:530px"></div>
<div class="gl" style="top:530px"></div>
<div class="c n" style="left:74px;top:505px;width:29px;height:25px;line-height:25px">10</div>
<div class="c" style="left:104px;top:505px;width:244px;height:25px;line-height:25px"><span class="tx">CAM SA, DA</span></div>
<div class="c" style="left:349px;top:505px;width:59px;height:25px;line-height:25px"><span class="tx">P2-A</span></div>
<div class="c n" style="left:409px;top:505px;width:32px;height:25px;line-height:25px">1</div>
<div class="c" style="left:442px;top:505px;width:84px;height:25px;line-height:25px"><span class="tx">NO</span></div>
<div class="c" style="left:527px;top:505px;width:58px;height:25px;line-height:25px"><span class="tx">NO</span></div>
<div class="c" style="left:586px;top:505px;width:69px;height:25px;line-height:25px"><span class="tx">C</span></div>
<div class="c" style="left:656px;top:505px;width:69px;height:25px;line-height:25px"><span class="tx">Septiembre</span></div>
<div class="c" style="left:726px;top:505px;width:69px;height:25px;line-height:25px"><span class="tx">DOMICILIADO</span></div>
<div class="c n" style="left:811px;top:505px;width:69px;height:25px;line-height:25px">5</div>
<div class="c n" style="left:881px;top:505px;width:69px;height:25px;line-height:25px">932.19</div>
<div class="c n" style="left:951px;top:505px;width:69px;height:25px;line-height:25px">48.30</div>
<div class="c n" style="left:1021px;top:505px;width:69px;height:25px;line-height:25px">77.28</div>
<div class="c n" style="left:1091px;top:505px;width:69px;height:25px;line-height:25px">86.94</div>
<div class="c n" style="left:1161px;top:505px;width:69px;height:25px;line-height:25px">82.11</div>
<div class="c n" style="left:1231px;top:505px;width:69px;height:25px;line-height:25px">207.69</div>
<div class="c n" style="left:1301px;top:505px;width:69px;height:25px;line-height:25px">86.94</div>
<div class="c n" style="left:1371px;top:505px;width:69px;height:25px;line-height:25px">72.45</div>
<div class="c n" style="left:1441px;top:505px;width:69px;height:25px;line-height:25px">67.62</div>
<div class="c n" style="left:1511px;top:505px;width:69px;height:25px;line-height:25px">111.09</div>
<div class="c n" style="left:1581px;top:505px;width:69px;height:25px;line-height:25px">91.77</div>
<div class="c n" style="left:1651px;top:505px;width:69px;height:25px;line-height:25px">0.00</div>
<div class="c n" style="left:1721px;top:505px;width:69px;height:25px;line-height:25px">0.00</div>
<div class="fc" style="top:531px;height:26px;line-height:26px"><span class="fn">16</span></div>
<div class="fl" style="top:557px"></div>
<div class="gl" style="top:557px"></div>
<div class="c n" style="left:74px;top:531px;width:29px;height:26px;line-height:26px">10</div>
<div class="c" style="left:104px;top:531px;width:244px;height:26px;line-height:26px"><span class="tx">CAM SA, AN</span></div>
<div class="c" style="left:349px;top:531px;width:59px;height:26px;line-height:26px"><span class="tx">P5-A</span></div>
<div class="c n" style="left:409px;top:531px;width:32px;height:26px;line-height:26px">1</div>
<div class="c" style="left:442px;top:531px;width:84px;height:26px;line-height:26px"><span class="tx">NO</span></div>
<div class="c" style="left:527px;top:531px;width:58px;height:26px;line-height:26px"><span class="tx">NO</span></div>
<div class="c" style="left:586px;top:531px;width:69px;height:26px;line-height:26px"><span class="tx">C</span></div>
<div class="c" style="left:656px;top:531px;width:69px;height:26px;line-height:26px"><span class="tx">Septiembre</span></div>
<div class="c" style="left:726px;top:531px;width:69px;height:26px;line-height:26px"><span class="tx">DOMICILIADO</span></div>
<div class="c n" style="left:811px;top:531px;width:69px;height:26px;line-height:26px">5</div>
<div class="c n" style="left:881px;top:531px;width:69px;height:26px;line-height:26px">932.19</div>
<div class="c n" style="left:951px;top:531px;width:69px;height:26px;line-height:26px">48.30</div>
<div class="c n" style="left:1021px;top:531px;width:69px;height:26px;line-height:26px">77.28</div>
<div class="c n" style="left:1091px;top:531px;width:69px;height:26px;line-height:26px">86.94</div>
<div class="c n" style="left:1161px;top:531px;width:69px;height:26px;line-height:26px">82.11</div>
<div class="c n" style="left:1231px;top:531px;width:69px;height:26px;line-height:26px">207.69</div>
<div class="c n" style="left:1301px;top:531px;width:69px;height:26px;line-height:26px">86.94</div>
<div class="c n" style="left:1371px;top:531px;width:69px;height:26px;line-height:26px">72.45</div>
<div class="c n" style="left:1441px;top:531px;width:69px;height:26px;line-height:26px">67.62</div>
<div class="c n" style="left:1511px;top:531px;width:69px;height:26px;line-height:26px">111.09</div>
<div class="c n" style="left:1581px;top:531px;width:69px;height:26px;line-height:26px">91.77</div>
<div class="c n" style="left:1651px;top:531px;width:69px;height:26px;line-height:26px">0.00</div>
<div class="c n" style="left:1721px;top:531px;width:69px;height:26px;line-height:26px">0.00</div>
<div class="fc" style="top:558px;height:25px;line-height:25px"><span class="fn">17</span></div>
<div class="fl" style="top:583px"></div>
<div class="gl" style="top:583px"></div>
<div class="c n" style="left:74px;top:558px;width:29px;height:25px;line-height:25px">11</div>
<div class="c" style="left:104px;top:558px;width:244px;height:25px;line-height:25px"><span class="tx">CAR LO, RE</span></div>
<div class="c" style="left:349px;top:558px;width:59px;height:25px;line-height:25px"><span class="tx">P1-A</span></div>
<div class="c n" style="left:409px;top:558px;width:32px;height:25px;line-height:25px">1</div>
<div class="c" style="left:442px;top:558px;width:84px;height:25px;line-height:25px"><span class="tx">NO</span></div>
<div class="c" style="left:527px;top:558px;width:58px;height:25px;line-height:25px"><span class="tx">NO</span></div>
<div class="c" style="left:586px;top:558px;width:69px;height:25px;line-height:25px"><span class="tx">C</span></div>
<div class="c" style="left:656px;top:558px;width:69px;height:25px;line-height:25px"><span class="tx">Septiembre</span></div>
<div class="c" style="left:726px;top:558px;width:69px;height:25px;line-height:25px"><span class="tx">NO DOMICILIADO</span></div>
<div class="c n" style="left:811px;top:558px;width:69px;height:25px;line-height:25px">5</div>
<div class="c n" style="left:881px;top:558px;width:69px;height:25px;line-height:25px">932.19</div>
<div class="c n" style="left:951px;top:558px;width:69px;height:25px;line-height:25px">48.30</div>
<div class="c n" style="left:1021px;top:558px;width:69px;height:25px;line-height:25px">77.28</div>
<div class="c n" style="left:1091px;top:558px;width:69px;height:25px;line-height:25px">86.94</div>
<div class="c n" style="left:1161px;top:558px;width:69px;height:25px;line-height:25px">82.11</div>
<div class="c n" style="left:1231px;top:558px;width:69px;height:25px;line-height:25px">207.69</div>
<div class="c n" style="left:1301px;top:558px;width:69px;height:25px;line-height:25px">86.94</div>
<div class="c n" style="left:1371px;top:558px;width:69px;height:25px;line-height:25px">72.45</div>
<div class="c n" style="left:1441px;top:558px;width:69px;height:25px;line-height:25px">67.62</div>
<div class="c n" style="left:1511px;top:558px;width:69px;height:25px;line-height:25px">111.09</div>
<div class="c n" style="left:1581px;top:558px;width:69px;height:25px;line-height:25px">91.77</div>
<div class="c n" style="left:1651px;top:558px;width:69px;height:25px;line-height:25px">0.00</div>
<div class="c n" style="left:1721px;top:558px;width:69px;height:25px;line-height:25px">0.00</div>
<div class="fc" style="top:584px;height:25px;line-height:25px"><span class="fn">18</span></div>
<div class="fl" style="top:609px"></div>
<div class="gl" style="top:609px"></div>
<div class="c n" style="left:74px;top:584px;width:29px;height:25px;line-height:25px">12</div>
<div class="c" style="left:104px;top:584px;width:244px;height:25px;line-height:25px"><span class="tx">CE MA, AL</span></div>
<div class="c" style="left:349px;top:584px;width:59px;height:25px;line-height:25px"><span class="tx">P2-A</span></div>
<div class="c n" style="left:409px;top:584px;width:32px;height:25px;line-height:25px">1</div>
<div class="c" style="left:442px;top:584px;width:84px;height:25px;line-height:25px"><span class="tx">NO</span></div>
<div class="c" style="left:527px;top:584px;width:58px;height:25px;line-height:25px"><span class="tx">NO</span></div>
<div class="c" style="left:586px;top:584px;width:69px;height:25px;line-height:25px"><span class="tx">C</span></div>
<div class="c" style="left:656px;top:584px;width:69px;height:25px;line-height:25px"><span class="tx">Septiembre</span></div>
<div class="c" style="left:726px;top:584px;width:69px;height:25px;line-height:25px"><span class="tx">DOMICILIADO</span></div>
<div class="c n" style="left:811px;top:584px;width:69px;height:25px;line-height:25px">5</div>
<div class="c n" style="left:881px;top:584px;width:69px;height:25px;line-height:25px">932.19</div>
<div class="c n" style="left:951px;top:584px;width:69px;height:25px;line-height:25px">48.30</div>
<div class="c n" style="left:1021px;top:584px;width:69px;height:25px;line-height:25px">77.28</div>
<div class="c n" style="left:1091px;top:584px;width:69px;height:25px;line-height:25px">86.94</div>
<div class="c n" style="left:1161px;top:584px;width:69px;height:25px;line-height:25px">82.11</div>
<div class="c n" style="left:1231px;top:584px;width:69px;height:25px;line-height:25px">207.69</div>
<div class="c n" style="left:1301px;top:584px;width:69px;height:25px;line-height:25px">86.94</div>
<div class="c n" style="left:1371px;top:584px;width:69px;height:25px;line-height:25px">72.45</div>
<div class="c n" style="left:1441px;top:584px;width:69px;height:25px;line-height:25px">67.62</div>
<div class="c n" style="left:1511px;top:584px;width:69px;height:25px;line-height:25px">111.09</div>
<div class="c n" style="left:1581px;top:584px;width:69px;height:25px;line-height:25px">91.77</div>
<div class="c n" style="left:1651px;top:584px;width:69px;height:25px;line-height:25px">0.00</div>
<div class="c n" style="left:1721px;top:584px;width:69px;height:25px;line-height:25px">0.00</div>
<div class="fc" style="top:610px;height:25px;line-height:25px"><span class="fn">19</span></div>
<div class="fl" style="top:635px"></div>
<div class="gl" style="top:635px"></div>
<div class="c n" style="left:74px;top:610px;width:29px;height:25px;line-height:25px">13</div>
<div class="c" style="left:104px;top:610px;width:244px;height:25px;line-height:25px"><span class="tx">CH PAR, G A</span></div>
<div class="c" style="left:349px;top:610px;width:59px;height:25px;line-height:25px"><span class="tx">P4-C</span></div>
<div class="c n" style="left:409px;top:610px;width:32px;height:25px;line-height:25px">1</div>
<div class="c" style="left:442px;top:610px;width:84px;height:25px;line-height:25px"><span class="tx">NO</span></div>
<div class="c" style="left:527px;top:610px;width:58px;height:25px;line-height:25px"><span class="tx">NO</span></div>
<div class="c" style="left:586px;top:610px;width:69px;height:25px;line-height:25px"><span class="tx">C</span></div>
<div class="c" style="left:656px;top:610px;width:69px;height:25px;line-height:25px"><span class="tx">Septiembre</span></div>
<div class="c" style="left:726px;top:610px;width:69px;height:25px;line-height:25px"><span class="tx">NO DOMICILIADO</span></div>
<div class="c n" style="left:811px;top:610px;width:69px;height:25px;line-height:25px">5</div>
<div class="c n" style="left:881px;top:610px;width:69px;height:25px;line-height:25px">932.19</div>
<div class="c n" style="left:951px;top:610px;width:69px;height:25px;line-height:25px">48.30</div>
<div class="c n" style="left:1021px;top:610px;width:69px;height:25px;line-height:25px">77.28</div>
<div class="c n" style="left:1091px;top:610px;width:69px;height:25px;line-height:25px">86.94</div>
<div class="c n" style="left:1161px;top:610px;width:69px;height:25px;line-height:25px">82.11</div>
<div class="c n" style="left:1231px;top:610px;width:69px;height:25px;line-height:25px">207.69</div>
<div class="c n" style="left:1301px;top:610px;width:69px;height:25px;line-height:25px">86.94</div>
<div class="c n" style="left:1371px;top:610px;width:69px;height:25px;line-height:25px">72.45</div>
<div class="c n" style="left:1441px;top:610px;width:69px;height:25px;line-height:25px">67.62</div>
<div class="c n" style="left:1511px;top:610px;width:69px;height:25px;line-height:25px">111.09</div>
<div class="c n" style="left:1581px;top:610px;width:69px;height:25px;line-height:25px">91.77</div>
<div class="c n" style="left:1651px;top:610px;width:69px;height:25px;line-height:25px">0.00</div>
<div class="c n" style="left:1721px;top:610px;width:69px;height:25px;line-height:25px">0.00</div>
<div class="fc" style="top:636px;height:26px;line-height:26px"><span class="fn">20</span></div>
<div class="fl" style="top:662px"></div>
<div class="gl" style="top:662px"></div>
<div class="c n" style="left:74px;top:636px;width:29px;height:26px;line-height:26px">13</div>
<div class="c" style="left:104px;top:636px;width:244px;height:26px;line-height:26px"><span class="tx">CH PAR, MI</span></div>
<div class="c" style="left:349px;top:636px;width:59px;height:26px;line-height:26px"><span class="tx">I5-B</span></div>
<div class="c n" style="left:409px;top:636px;width:32px;height:26px;line-height:26px">1</div>
<div class="c" style="left:442px;top:636px;width:84px;height:26px;line-height:26px"><span class="tx">NO</span></div>
<div class="c" style="left:527px;top:636px;width:58px;height:26px;line-height:26px"><span class="tx">NO</span></div>
<div class="c" style="left:586px;top:636px;width:69px;height:26px;line-height:26px"><span class="tx">C</span></div>
<div class="c" style="left:656px;top:636px;width:69px;height:26px;line-height:26px"><span class="tx">Septiembre</span></div>
<div class="c" style="left:726px;top:636px;width:69px;height:26px;line-height:26px"><span class="tx">NO DOMICILIADO</span></div>
<div class="c n" style="left:811px;top:636px;width:69px;height:26px;line-height:26px">5</div>
<div class="c n" style="left:881px;top:636px;width:69px;height:26px;line-height:26px">932.19</div>
<div class="c n" style="left:951px;top:636px;width:69px;height:26px;line-height:26px">48.30</div>
<div class="c n" style="left:1021px;top:636px;width:69px;height:26px;line-height:26px">77.28</div>
<div class="c n" style="left:1091px;top:636px;width:69px;height:26px;line-height:26px">86.94</div>
<div class="c n" style="left:1161px;top:636px;width:69px;height:26px;line-height:26px">82.11</div>
<div class="c n" style="left:1231px;top:636px;width:69px;height:26px;line-height:26px">207.69</div>
<div class="c n" style="left:1301px;top:636px;width:69px;height:26px;line-height:26px">86.94</div>
<div class="c n" style="left:1371px;top:636px;width:69px;height:26px;line-height:26px">72.45</div>
<div class="c n" style="left:1441px;top:636px;width:69px;height:26px;line-height:26px">67.62</div>
<div class="c n" style="left:1511px;top:636px;width:69px;height:26px;line-height:26px">111.09</div>
<div class="c n" style="left:1581px;top:636px;width:69px;height:26px;line-height:26px">91.77</div>
<div class="c n" style="left:1651px;top:636px;width:69px;height:26px;line-height:26px">0.00</div>
<div class="c n" style="left:1721px;top:636px;width:69px;height:26px;line-height:26px">0.00</div>
<div class="fc" style="top:663px;height:25px;line-height:25px"><span class="fn">21</span></div>
<div class="fl" style="top:688px"></div>
<div class="gl" style="top:688px"></div>
<div class="c n" style="left:74px;top:663px;width:29px;height:25px;line-height:25px">14</div>
<div class="c" style="left:104px;top:663px;width:244px;height:25px;line-height:25px"><span class="tx">CO MA, JO MA</span></div>
<div class="c" style="left:349px;top:663px;width:59px;height:25px;line-height:25px"><span class="tx">P2-A</span></div>
<div class="c n" style="left:409px;top:663px;width:32px;height:25px;line-height:25px">1</div>
<div class="c" style="left:442px;top:663px;width:84px;height:25px;line-height:25px"><span class="tx">NO</span></div>
<div class="c" style="left:527px;top:663px;width:58px;height:25px;line-height:25px"><span class="tx">NO</span></div>
<div class="c" style="left:586px;top:663px;width:69px;height:25px;line-height:25px"><span class="tx">LMXJ-Esp</span></div>
<div class="c" style="left:656px;top:663px;width:69px;height:25px;line-height:25px"><span class="tx">Septiembre</span></div>
<div class="c" style="left:726px;top:663px;width:69px;height:25px;line-height:25px"><span class="tx">DOMICILIADO</span></div>
<div class="c n" style="left:811px;top:663px;width:69px;height:25px;line-height:25px">6</div>
<div class="c n" style="left:881px;top:663px;width:69px;height:25px;line-height:25px">730.45</div>
<div class="c n" style="left:951px;top:663px;width:69px;height:25px;line-height:25px">38.64</div>
<div class="c n" style="left:1021px;top:663px;width:69px;height:25px;line-height:25px">57.96</div>
<div class="c n" style="left:1091px;top:663px;width:69px;height:25px;line-height:25px">57.96</div>
<div class="c n" style="left:1161px;top:663px;width:69px;height:25px;line-height:25px">30.10</div>
<div class="c n" style="left:1231px;top:663px;width:69px;height:25px;line-height:25px">188.37</div>
<div class="c n" style="left:1301px;top:663px;width:69px;height:25px;line-height:25px">62.79</div>
<div class="c n" style="left:1371px;top:663px;width:69px;height:25px;line-height:25px">72.45</div>
<div class="c n" style="left:1441px;top:663px;width:69px;height:25px;line-height:25px">57.96</div>
<div class="c n" style="left:1511px;top:663px;width:69px;height:25px;line-height:25px">86.94</div>
<div class="c n" style="left:1581px;top:663px;width:69px;height:25px;line-height:25px">77.28</div>
<div class="c n" style="left:1651px;top:663px;width:69px;height:25px;line-height:25px">0.00</div>
<div class="c n" style="left:1721px;top:663px;width:69px;height:25px;line-height:25px">0.00</div>
<div class="fc" style="top:689px;height:25px;line-height:25px"><span class="fn">22</span></div>
<div class="fl" style="top:714px"></div>
<div class="gl" style="top:714px"></div>
<div class="c n" style="left:74px;top:689px;width:29px;height:25px;line-height:25px">14</div>
<div class="c" style="left:104px;top:689px;width:244px;height:25px;line-height:25px"><span class="tx">CO MA, AZ</span></div>
<div class="c" style="left:349px;top:689px;width:59px;height:25px;line-height:25px"><span class="tx">I3-A</span></div>
<div class="c n" style="left:409px;top:689px;width:32px;height:25px;line-height:25px">1</div>
<div class="c" style="left:442px;top:689px;width:84px;height:25px;line-height:25px"><span class="tx">NO</span></div>
<div class="c" style="left:527px;top:689px;width:58px;height:25px;line-height:25px"><span class="tx">NO</span></div>
<div class="c" style="left:586px;top:689px;width:69px;height:25px;line-height:25px"><span class="tx">LMXJ</span></div>
<div class="c" style="left:656px;top:689px;width:69px;height:25px;line-height:25px"><span class="tx">Septiembre</span></div>
<div class="c" style="left:726px;top:689px;width:69px;height:25px;line-height:25px"><span class="tx">DOMICILIADO</span></div>
<div class="c n" style="left:811px;top:689px;width:69px;height:25px;line-height:25px">6</div>
<div class="c n" style="left:881px;top:689px;width:69px;height:25px;line-height:25px">767.97</div>
<div class="c n" style="left:951px;top:689px;width:69px;height:25px;line-height:25px">38.64</div>
<div class="c n" style="left:1021px;top:689px;width:69px;height:25px;line-height:25px">57.96</div>
<div class="c n" style="left:1091px;top:689px;width:69px;height:25px;line-height:25px">57.96</div>
<div class="c n" style="left:1161px;top:689px;width:69px;height:25px;line-height:25px">67.62</div>
<div class="c n" style="left:1231px;top:689px;width:69px;height:25px;line-height:25px">188.37</div>
<div class="c n" style="left:1301px;top:689px;width:69px;height:25px;line-height:25px">62.79</div>
<div class="c n" style="left:1371px;top:689px;width:69px;height:25px;line-height:25px">72.45</div>
<div class="c n" style="left:1441px;top:689px;width:69px;height:25px;line-height:25px">57.96</div>
<div class="c n" style="left:1511px;top:689px;width:69px;height:25px;line-height:25px">86.94</div>
<div class="c n" style="left:1581px;top:689px;width:69px;height:25px;line-height:25px">77.28</div>
<div class="c n" style="left:1651px;top:689px;width:69px;height:25px;line-height:25px">0.00</div>
<div class="c n" style="left:1721px;top:689px;width:69px;height:25px;line-height:25px">0.00</div>
<div class="fc" style="top:715px;height:25px;line-height:25px"><span class="fn">23</span></div>
<div class="fl" style="top:740px"></div>
<div class="gl" style="top:740px"></div>
<div class="c n" style="left:74px;top:715px;width:29px;height:25px;line-height:25px">15</div>
<div class="c" style="left:104px;top:715px;width:244px;height:25px;line-height:25px"><span class="tx">DA NA, NIC</span></div>
<div class="c" style="left:349px;top:715px;width:59px;height:25px;line-height:25px"><span class="tx">I5-A</span></div>
<div class="c n" style="left:409px;top:715px;width:32px;height:25px;line-height:25px">1</div>
<div class="c" style="left:442px;top:715px;width:84px;height:25px;line-height:25px"><span class="tx">NO</span></div>
<div class="c" style="left:527px;top:715px;width:58px;height:25px;line-height:25px"><span class="tx">NO</span></div>
<div class="c" style="left:586px;top:715px;width:69px;height:25px;line-height:25px"><span class="tx">C</span></div>
<div class="c" style="left:656px;top:715px;width:69px;height:25px;line-height:25px"><span class="tx">Septiembre</span></div>
<div class="c" style="left:726px;top:715px;width:69px;height:25px;line-height:25px"><span class="tx">NO DOMICILIADO</span></div>
<div class="c n" style="left:811px;top:715px;width:69px;height:25px;line-height:25px">5</div>
<div class="c n" style="left:881px;top:715px;width:69px;height:25px;line-height:25px">932.19</div>
<div class="c n" style="left:951px;top:715px;width:69px;height:25px;line-height:25px">48.30</div>
<div class="c n" style="left:1021px;top:715px;width:69px;height:25px;line-height:25px">77.28</div>
<div class="c n" style="left:1091px;top:715px;width:69px;height:25px;line-height:25px">86.94</div>
<div class="c n" style="left:1161px;top:715px;width:69px;height:25px;line-height:25px">82.11</div>
<div class="c n" style="left:1231px;top:715px;width:69px;height:25px;line-height:25px">207.69</div>
<div class="c n" style="left:1301px;top:715px;width:69px;height:25px;line-height:25px">86.94</div>
<div class="c n" style="left:1371px;top:715px;width:69px;height:25px;line-height:25px">72.45</div>
<div class="c n" style="left:1441px;top:715px;width:69px;height:25px;line-height:25px">67.62</div>
<div class="c n" style="left:1511px;top:715px;width:69px;height:25px;line-height:25px">111.09</div>
<div class="c n" style="left:1581px;top:715px;width:69px;height:25px;line-height:25px">91.77</div>
<div class="c n" style="left:1651px;top:715px;width:69px;height:25px;line-height:25px">0.00</div>
<div class="c n" style="left:1721px;top:715px;width:69px;height:25px;line-height:25px">0.00</div>
<div class="fc" style="top:741px;height:26px;line-height:26px"><span class="fn">24</span></div>
<div class="fl" style="top:767px"></div>
<div class="gl" style="top:767px"></div>
<div class="c n" style="left:74px;top:741px;width:29px;height:26px;line-height:26px">16</div>
<div class="c" style="left:104px;top:741px;width:244px;height:26px;line-height:26px"><span class="tx">ES RO, FRA</span></div>
<div class="c" style="left:349px;top:741px;width:59px;height:26px;line-height:26px"><span class="tx">P3-A</span></div>
<div class="c n" style="left:409px;top:741px;width:32px;height:26px;line-height:26px">1</div>
<div class="c" style="left:442px;top:741px;width:84px;height:26px;line-height:26px"><span class="tx">NO</span></div>
<div class="c" style="left:527px;top:741px;width:58px;height:26px;line-height:26px"><span class="tx">NO</span></div>
<div class="c" style="left:586px;top:741px;width:69px;height:26px;line-height:26px"><span class="tx">C</span></div>
<div class="c" style="left:656px;top:741px;width:69px;height:26px;line-height:26px"><span class="tx">Septiembre</span></div>
<div class="c" style="left:726px;top:741px;width:69px;height:26px;line-height:26px"><span class="tx">DOMICILIADO</span></div>
<div class="c n" style="left:811px;top:741px;width:69px;height:26px;line-height:26px">5</div>
<div class="c n" style="left:881px;top:741px;width:69px;height:26px;line-height:26px">932.19</div>
<div class="c n" style="left:951px;top:741px;width:69px;height:26px;line-height:26px">48.30</div>
<div class="c n" style="left:1021px;top:741px;width:69px;height:26px;line-height:26px">77.28</div>
<div class="c n" style="left:1091px;top:741px;width:69px;height:26px;line-height:26px">86.94</div>
<div class="c n" style="left:1161px;top:741px;width:69px;height:26px;line-height:26px">82.11</div>
<div class="c n" style="left:1231px;top:741px;width:69px;height:26px;line-height:26px">207.69</div>
<div class="c n" style="left:1301px;top:741px;width:69px;height:26px;line-height:26px">86.94</div>
<div class="c n" style="left:1371px;top:741px;width:69px;height:26px;line-height:26px">72.45</div>
<div class="c n" style="left:1441px;top:741px;width:69px;height:26px;line-height:26px">67.62</div>
<div class="c n" style="left:1511px;top:741px;width:69px;height:26px;line-height:26px">111.09</div>
<div class="c n" style="left:1581px;top:741px;width:69px;height:26px;line-height:26px">91.77</div>
<div class="c n" style="left:1651px;top:741px;width:69px;height:26px;line-height:26px">0.00</div>
<div class="c n" style="left:1721px;top:741px;width:69px;height:26px;line-height:26px">0.00</div>
<div class="fc" style="top:768px;height:25px;line-height:25px"><span class="fn">25</span></div>
<div class="fl" style="top:793px"></div>
<div class="gl" style="top:793px"></div>
<div class="c n" style="left:74px;top:768px;width:29px;height:25px;line-height:25px">16</div>
<div class="c" style="left:104px;top:768px;width:244px;height:25px;line-height:25px"><span class="tx">ES RO, PA</span></div>
<div class="c" style="left:349px;top:768px;width:59px;height:25px;line-height:25px"><span class="tx">P1-B</span></div>
<div class="c n" style="left:409px;top:768px;width:32px;height:25px;line-height:25px">1</div>
<div class="c" style="left:442px;top:768px;width:84px;height:25px;line-height:25px"><span class="tx">NO</span></div>
<div class="c" style="left:527px;top:768px;width:58px;height:25px;line-height:25px"><span class="tx">NO</span></div>
<div class="c" style="left:586px;top:768px;width:69px;height:25px;line-height:25px"><span class="tx">C</span></div>
<div class="c" style="left:656px;top:768px;width:69px;height:25px;line-height:25px"><span class="tx">Septiembre</span></div>
<div class="c" style="left:726px;top:768px;width:69px;height:25px;line-height:25px"><span class="tx">DOMICILIADO</span></div>
<div class="c n" style="left:811px;top:768px;width:69px;height:25px;line-height:25px">5</div>
<div class="c n" style="left:881px;top:768px;width:69px;height:25px;line-height:25px">932.19</div>
<div class="c n" style="left:951px;top:768px;width:69px;height:25px;line-height:25px">48.30</div>
<div class="c n" style="left:1021px;top:768px;width:69px;height:25px;line-height:25px">77.28</div>
<div class="c n" style="left:1091px;top:768px;width:69px;height:25px;line-height:25px">86.94</div>
<div class="c n" style="left:1161px;top:768px;width:69px;height:25px;line-height:25px">82.11</div>
<div class="c n" style="left:1231px;top:768px;width:69px;height:25px;line-height:25px">207.69</div>
<div class="c n" style="left:1301px;top:768px;width:69px;height:25px;line-height:25px">86.94</div>
<div class="c n" style="left:1371px;top:768px;width:69px;height:25px;line-height:25px">72.45</div>
<div class="c n" style="left:1441px;top:768px;width:69px;height:25px;line-height:25px">67.62</div>
<div class="c n" style="left:1511px;top:768px;width:69px;height:25px;line-height:25px">111.09</div>
<div class="c n" style="left:1581px;top:768px;width:69px;height:25px;line-height:25px">91.77</div>
<div class="c n" style="left:1651px;top:768px;width:69px;height:25px;line-height:25px">0.00</div>
<div class="c n" style="left:1721px;top:768px;width:69px;height:25px;line-height:25px">0.00</div>
<div class="fc" style="top:794px;height:25px;line-height:25px"><span class="fn">26</span></div>
<div class="fl" style="top:819px"></div>
<div class="gl" style="top:819px"></div>
<div class="c n" style="left:74px;top:794px;width:29px;height:25px;line-height:25px">17</div>
<div class="c" style="left:104px;top:794px;width:244px;height:25px;line-height:25px"><span class="tx">FER AL, JOS</span></div>
<div class="c" style="left:349px;top:794px;width:59px;height:25px;line-height:25px"><span class="tx">P4-A</span></div>
<div class="c n" style="left:409px;top:794px;width:32px;height:25px;line-height:25px">1</div>
<div class="c" style="left:442px;top:794px;width:84px;height:25px;line-height:25px"><span class="tx">NO</span></div>
<div class="c" style="left:527px;top:794px;width:58px;height:25px;line-height:25px"><span class="tx">NO</span></div>
<div class="c" style="left:586px;top:794px;width:69px;height:25px;line-height:25px"><span class="tx">LMX</span></div>
<div class="c" style="left:656px;top:794px;width:69px;height:25px;line-height:25px"><span class="tx">Septiembre</span></div>
<div class="c" style="left:726px;top:794px;width:69px;height:25px;line-height:25px"><span class="tx">DOMICILIADO</span></div>
<div class="c n" style="left:811px;top:794px;width:69px;height:25px;line-height:25px">3</div>
<div class="c n" style="left:881px;top:794px;width:69px;height:25px;line-height:25px">255.99</div>
<div class="c n" style="left:951px;top:794px;width:69px;height:25px;line-height:25px">28.98</div>
<div class="c n" style="left:1021px;top:794px;width:69px;height:25px;line-height:25px">33.81</div>
<div class="c n" style="left:1091px;top:794px;width:69px;height:25px;line-height:25px">43.47</div>
<div class="c n" style="left:1161px;top:794px;width:69px;height:25px;line-height:25px">38.64</div>
<div class="c n" style="left:1231px;top:794px;width:69px;height:25px;line-height:25px">67.62</div>
<div class="c n" style="left:1301px;top:794px;width:69px;height:25px;line-height:25px">43.47</div>
<div class="c n" style="left:1371px;top:794px;width:69px;height:25px;line-height:25px">0.00</div>
<div class="c n" style="left:1441px;top:794px;width:69px;height:25px;line-height:25px">0.00</div>
<div class="c n" style="left:1511px;top:794px;width:69px;height:25px;line-height:25px">0.00</div>
<div class="c n" style="left:1581px;top:794px;width:69px;height:25px;line-height:25px">0.00</div>
<div class="c n" style="left:1651px;top:794px;width:69px;height:25px;line-height:25px">0.00</div>
<div class="c n" style="left:1721px;top:794px;width:69px;height:25px;line-height:25px">0.00</div>
<div class="fc" style="top:820px;height:25px;line-height:25px"><span class="fn">27</span></div>
<div class="fl" style="top:845px"></div>
<div class="gl" style="top:845px"></div>
<div class="c n" style="left:74px;top:820px;width:29px;height:25px;line-height:25px">18</div>
<div class="c" style="left:104px;top:820px;width:244px;height:25px;line-height:25px"><span class="tx">GA MA, AL</span></div>
<div class="c" style="left:349px;top:820px;width:59px;height:25px;line-height:25px"><span class="tx">I4-OTRO</span></div>
<div class="c n" style="left:409px;top:820px;width:32px;height:25px;line-height:25px">1</div>
<div class="c" style="left:442px;top:820px;width:84px;height:25px;line-height:25px"><span class="tx">NO</span></div>
<div class="c" style="left:527px;top:820px;width:58px;height:25px;line-height:25px"><span class="tx">NO</span></div>
<div class="c" style="left:586px;top:820px;width:69px;height:25px;line-height:25px"><span class="tx">C</span></div>
<div class="c" style="left:656px;top:820px;width:69px;height:25px;line-height:25px"><span class="tx">Septiembre</span></div>
<div class="c" style="left:726px;top:820px;width:69px;height:25px;line-height:25px"><span class="tx">DOMICILIADO</span></div>
<div class="c n" style="left:811px;top:820px;width:69px;height:25px;line-height:25px">5</div>
<div class="c n" style="left:881px;top:820px;width:69px;height:25px;line-height:25px">932.19</div>
<div class="c n" style="left:951px;top:820px;width:69px;height:25px;line-height:25px">48.30</div>
<div class="c n" style="left:1021px;top:820px;width:69px;height:25px;line-height:25px">77.28</div>
<div class="c n" style="left:1091px;top:820px;width:69px;height:25px;line-height:25px">86.94</div>
<div class="c n" style="left:1161px;top:820px;width:69px;height:25px;line-height:25px">82.11</div>
<div class="c n" style="left:1231px;top:820px;width:69px;height:25px;line-height:25px">207.69</div>
<div class="c n" style="left:1301px;top:820px;width:69px;height:25px;line-height:25px">86.94</div>
<div class="c n" style="left:1371px;top:820px;width:69px;height:25px;line-height:25px">72.45</div>
<div class="c n" style="left:1441px;top:820px;width:69px;height:25px;line-height:25px">67.62</div>
<div class="c n" style="left:1511px;top:820px;width:69px;height:25px;line-height:25px">111.09</div>
<div class="c n" style="left:1581px;top:820px;width:69px;height:25px;line-height:25px">91.77</div>
<div class="c n" style="left:1651px;top:820px;width:69px;height:25px;line-height:25px">0.00</div>
<div class="c n" style="left:1721px;top:820px;width:69px;height:25px;line-height:25px">0.00</div>
<div class="fc" style="top:846px;height:26px;line-height:26px"><span class="fn">28</span></div>
<div class="fl" style="top:872px"></div>
<div class="gl" style="top:872px"></div>
<div class="c n" style="left:74px;top:846px;width:29px;height:26px;line-height:26px">19</div>
<div class="c" style="left:104px;top:846px;width:244px;height:26px;line-height:26px"><span class="tx">GO GOM, JA</span></div>
<div class="c" style="left:349px;top:846px;width:59px;height:26px;line-height:26px"><span class="tx">I5-A</span></div>
<div class="c n" style="left:409px;top:846px;width:32px;height:26px;line-height:26px">1</div>
<div class="c" style="left:442px;top:846px;width:84px;height:26px;line-height:26px"><span class="tx">NO</span></div>
<div class="c" style="left:527px;top:846px;width:58px;height:26px;line-height:26px"><span class="tx">NO</span></div>
<div class="c" style="left:586px;top:846px;width:69px;height:26px;line-height:26px"><span class="tx">C</span></div>
<div class="c" style="left:656px;top:846px;width:69px;height:26px;line-height:26px"><span class="tx">Septiembre</span></div>
<div class="c" style="left:726px;top:846px;width:69px;height:26px;line-height:26px"><span class="tx">DOMICILIADO</span></div>
<div class="c n" style="left:811px;top:846px;width:69px;height:26px;line-height:26px">5</div>
<div class="c n" style="left:881px;top:846px;width:69px;height:26px;line-height:26px">932.19</div>
<div class="c n" style="left:951px;top:846px;width:69px;height:26px;line-height:26px">48.30</div>
<div class="c n" style="left:1021px;top:846px;width:69px;height:26px;line-height:26px">77.28</div>
<div class="c n" style="left:1091px;top:846px;width:69px;height:26px;line-height:26px">86.94</div>
<div class="c n" style="left:1161px;top:846px;width:69px;height:26px;line-height:26px">82.11</div>
<div class="c n" style="left:1231px;top:846px;width:69px;height:26px;line-height:26px">207.69</div>
<div class="c n" style="left:1301px;top:846px;width:69px;height:26px;line-height:26px">86.94</div>
<div class="c n" style="left:1371px;top:846px;width:69px;height:26px;line-height:26px">72.45</div>
<div class="c n" style="left:1441px;top:846px;width:69px;height:26px;line-height:26px">67.62</div>
<div class="c n" style="left:1511px;top:846px;width:69px;height:26px;line-height:26px">111.09</div>
<div class="c n" style="left:1581px;top:846px;width:69px;height:26px;line-height:26px">91.77</div>
<div class="c n" style="left:1651px;top:846px;width:69px;height:26px;line-height:26px">0.00</div>
<div class="c n" style="left:1721px;top:846px;width:69px;height:26px;line-height:26px">0.00</div>
<div class="fc" style="top:873px;height:25px;line-height:25px"><span class="fn">29</span></div>
<div class="fl" style="top:898px"></div>
<div class="gl" style="top:898px"></div>
<div class="c n" style="left:74px;top:873px;width:29px;height:25px;line-height:25px">20</div>
<div class="c" style="left:104px;top:873px;width:244px;height:25px;line-height:25px"><span class="tx">GO SAN, SE</span></div>
<div class="c" style="left:349px;top:873px;width:59px;height:25px;line-height:25px"><span class="tx">P5-A</span></div>
<div class="c n" style="left:409px;top:873px;width:32px;height:25px;line-height:25px">1</div>
<div class="c" style="left:442px;top:873px;width:84px;height:25px;line-height:25px"><span class="tx">NO</span></div>
<div class="c" style="left:527px;top:873px;width:58px;height:25px;line-height:25px"><span class="tx">NO</span></div>
<div class="c" style="left:586px;top:873px;width:69px;height:25px;line-height:25px"><span class="tx">LXV</span></div>
<div class="c" style="left:656px;top:873px;width:69px;height:25px;line-height:25px"><span class="tx">Septiembre</span></div>
<div class="c" style="left:726px;top:873px;width:69px;height:25px;line-height:25px"><span class="tx">DOMICILIADO</span></div>
<div class="c n" style="left:811px;top:873px;width:69px;height:25px;line-height:25px">3</div>
<div class="c n" style="left:881px;top:873px;width:69px;height:25px;line-height:25px">531.30</div>
<div class="c n" style="left:951px;top:873px;width:69px;height:25px;line-height:25px">48.30</div>
<div class="c n" style="left:1021px;top:873px;width:69px;height:25px;line-height:25px">43.47</div>
<div class="c n" style="left:1091px;top:873px;width:69px;height:25px;line-height:25px">53.13</div>
<div class="c n" style="left:1161px;top:873px;width:69px;height:25px;line-height:25px">43.47</div>
<div class="c n" style="left:1231px;top:873px;width:69px;height:25px;line-height:25px">57.96</div>
<div class="c n" style="left:1301px;top:873px;width:69px;height:25px;line-height:25px">53.13</div>
<div class="c n" style="left:1371px;top:873px;width:69px;height:25px;line-height:25px">33.81</div>
<div class="c n" style="left:1441px;top:873px;width:69px;height:25px;line-height:25px">33.81</div>
<div class="c n" style="left:1511px;top:873px;width:69px;height:25px;line-height:25px">72.45</div>
<div class="c n" style="left:1581px;top:873px;width:69px;height:25px;line-height:25px">91.77</div>
<div class="c n" style="left:1651px;top:873px;width:69px;height:25px;line-height:25px">0.00</div>
<div class="c n" style="left:1721px;top:873px;width:69px;height:25px;line-height:25px">0.00</div>
<div class="fc" style="top:899px;height:25px;line-height:25px"><span class="fn">30</span></div>
<div class="fl" style="top:924px"></div>
<div class="gl" style="top:924px"></div>
<div class="c n" style="left:74px;top:899px;width:29px;height:25px;line-height:25px">21</div>
<div class="c" style="left:104px;top:899px;width:244px;height:25px;line-height:25px"><span class="tx">GON BU, CL</span></div>
<div class="c" style="left:349px;top:899px;width:59px;height:25px;line-height:25px"><span class="tx">P4-C</span></div>
<div class="c n" style="left:409px;top:899px;width:32px;height:25px;line-height:25px">1</div>
<div class="c" style="left:442px;top:899px;width:84px;height:25px;line-height:25px"><span class="tx">NO</span></div>
<div class="c" style="left:527px;top:899px;width:58px;height:25px;line-height:25px"><span class="tx">NO</span></div>
<div class="c" style="left:586px;top:899px;width:69px;height:25px;line-height:25px"><span class="tx">C</span></div>
<div class="c" style="left:656px;top:899px;width:69px;height:25px;line-height:25px"><span class="tx">Septiembre</span></div>
<div class="c" style="left:726px;top:899px;width:69px;height:25px;line-height:25px"><span class="tx">DOMICILIADO</span></div>
<div class="c n" style="left:811px;top:899px;width:69px;height:25px;line-height:25px">5</div>
<div class="c n" style="left:881px;top:899px;width:69px;height:25px;line-height:25px">932.19</div>
<div class="c n" style="left:951px;top:899px;width:69px;height:25px;line-height:25px">48.30</div>
<div class="c n" style="left:1021px;top:899px;width:69px;height:25px;line-height:25px">77.28</div>
<div class="c n" style="left:1091px;top:899px;width:69px;height:25px;line-height:25px">86.94</div>
<div class="c n" style="left:1161px;top:899px;width:69px;height:25px;line-height:25px">82.11</div>
<div class="c n" style="left:1231px;top:899px;width:69px;height:25px;line-height:25px">207.69</div>
<div class="c n" style="left:1301px;top:899px;width:69px;height:25px;line-height:25px">86.94</div>
<div class="c n" style="left:1371px;top:899px;width:69px;height:25px;line-height:25px">72.45</div>
<div class="c n" style="left:1441px;top:899px;width:69px;height:25px;line-height:25px">67.62</div>
<div class="c n" style="left:1511px;top:899px;width:69px;height:25px;line-height:25px">111.09</div>
<div class="c n" style="left:1581px;top:899px;width:69px;height:25px;line-height:25px">91.77</div>
<div class="c n" style="left:1651px;top:899px;width:69px;height:25px;line-height:25px">0.00</div>
<div class="c n" style="left:1721px;top:899px;width:69px;height:25px;line-height:25px">0.00</div>
<div class="fc" style="top:925px;height:25px;line-height:25px"><span class="fn">31</span></div>
<div class="fl" style="top:950px"></div>
<div class="gl" style="top:950px"></div>
<div class="c n" style="left:74px;top:925px;width:29px;height:25px;line-height:25px">22</div>
<div class="c" style="left:104px;top:925px;width:244px;height:25px;line-height:25px"><span class="tx">GR LO, PA</span></div>
<div class="c" style="left:349px;top:925px;width:59px;height:25px;line-height:25px"><span class="tx">I4-B</span></div>
<div class="c n" style="left:409px;top:925px;width:32px;height:25px;line-height:25px">1</div>
<div class="c" style="left:442px;top:925px;width:84px;height:25px;line-height:25px"><span class="tx">NO</span></div>
<div class="c" style="left:527px;top:925px;width:58px;height:25px;line-height:25px"><span class="tx">NO</span></div>
<div class="c" style="left:586px;top:925px;width:69px;height:25px;line-height:25px"><span class="tx">C</span></div>
<div class="c" style="left:656px;top:925px;width:69px;height:25px;line-height:25px"><span class="tx">Septiembre</span></div>
<div class="c" style="left:726px;top:925px;width:69px;height:25px;line-height:25px"><span class="tx">DOMICILIADO</span></div>
<div class="c n" style="left:811px;top:925px;width:69px;height:25px;line-height:25px">5</div>
<div class="c n" style="left:881px;top:925px;width:69px;height:25px;line-height:25px">932.19</div>
<div class="c n" style="left:951px;top:925px;width:69px;height:25px;line-height:25px">48.30</div>
<div class="c n" style="left:1021px;top:925px;width:69px;height:25px;line-height:25px">77.28</div>
<div class="c n" style="left:1091px;top:925px;width:69px;height:25px;line-height:25px">86.94</div>
<div class="c n" style="left:1161px;top:925px;width:69px;height:25px;line-height:25px">82.11</div>
<div class="c n" style="left:1231px;top:925px;width:69px;height:25px;line-height:25px">207.69</div>
<div class="c n" style="left:1301px;top:925px;width:69px;height:25px;line-height:25px">86.94</div>
<div class="c n" style="left:1371px;top:925px;width:69px;height:25px;line-height:25px">72.45</div>
<div class="c n" style="left:1441px;top:925px;width:69px;height:25px;line-height:25px">67.62</div>
<div class="c n" style="left:1511px;top:925px;width:69px;height:25px;line-height:25px">111.09</div>
<div class="c n" style="left:1581px;top:925px;width:69px;height:25px;line-height:25px">91.77</div>
<div class="c n" style="left:1651px;top:925px;width:69px;height:25px;line-height:25px">0.00</div>
<div class="c n" style="left:1721px;top:925px;width:69px;height:25px;line-height:25px">0.00</div>
<div class="gv" style="left:103px;top:164px;height:787px"></div>
<div class="sv" style="left:103px;top:137px;height:26px"></div>
<div class="gv" style="left:348px;top:164px;height:787px"></div>
<div class="sv" style="left:348px;top:137px;height:26px"></div>
<div class="gv" style="left:408px;top:164px;height:787px"></div>
<div class="sv" style="left:408px;top:137px;height:26px"></div>
<div class="gv" style="left:441px;top:164px;height:787px"></div>
<div class="sv" style="left:441px;top:137px;height:26px"></div>
<div class="gv" style="left:526px;top:164px;height:787px"></div>
<div class="sv" style="left:526px;top:137px;height:26px"></div>
<div class="gv" style="left:585px;top:164px;height:787px"></div>
<div class="sv" style="left:585px;top:137px;height:26px"></div>
<div class="gv" style="left:655px;top:164px;height:787px"></div>
<div class="sv" style="left:655px;top:137px;height:26px"></div>
<div class="gv" style="left:725px;top:164px;height:787px"></div>
<div class="sv" style="left:725px;top:137px;height:26px"></div>
<div class="gv" style="left:795px;top:164px;height:787px"></div>
<div class="sv" style="left:795px;top:137px;height:26px"></div>
<div class="gv" style="left:810px;top:164px;height:787px"></div>
<div class="sv" style="left:810px;top:137px;height:26px"></div>
<div class="gv" style="left:880px;top:164px;height:787px"></div>
<div class="sv" style="left:880px;top:137px;height:26px"></div>
<div class="gv" style="left:950px;top:164px;height:787px"></div>
<div class="sv" style="left:950px;top:137px;height:26px"></div>
<div class="gv" style="left:1020px;top:164px;height:787px"></div>
<div class="sv" style="left:1020px;top:137px;height:26px"></div>
<div class="gv" style="left:1090px;top:164px;height:787px"></div>
<div class="sv" style="left:1090px;top:137px;height:26px"></div>
<div class="gv" style="left:1160px;top:164px;height:787px"></div>
<div class="sv" style="left:1160px;top:137px;height:26px"></div>
<div class="gv" style="left:1230px;top:164px;height:787px"></div>
<div class="sv" style="left:1230px;top:137px;height:26px"></div>
<div class="gv" style="left:1300px;top:164px;height:787px"></div>
<div class="sv" style="left:1300px;top:137px;height:26px"></div>
<div class="gv" style="left:1370px;top:164px;height:787px"></div>
<div class="sv" style="left:1370px;top:137px;height:26px"></div>
<div class="gv" style="left:1440px;top:164px;height:787px"></div>
<div class="sv" style="left:1440px;top:137px;height:26px"></div>
<div class="gv" style="left:1510px;top:164px;height:787px"></div>
<div class="sv" style="left:1510px;top:137px;height:26px"></div>
<div class="gv" style="left:1580px;top:164px;height:787px"></div>
<div class="sv" style="left:1580px;top:137px;height:26px"></div>
<div class="gv" style="left:1650px;top:164px;height:787px"></div>
<div class="sv" style="left:1650px;top:137px;height:26px"></div>
<div class="gv" style="left:1720px;top:164px;height:787px"></div>
<div class="sv" style="left:1720px;top:137px;height:26px"></div>
<div class="fv" style="left:72px;top:136px;height:815px"></div>
<div class="bv" style="left:1790px;top:137px;height:814px"></div>
<div class="focus" style="left:73px;top:137px;width:1718px;height:26px"></div>
<div class="btn bb" style="left:25px;width:220px"><span style="position:absolute;left:16px">Ordenar por hermano 1</span></div>
<div class="btn bg" style="left:245px;width:182px"><span style="position:absolute;left:19px">Ordenar  por nivel</span></div>
<div class="btn bb" style="left:427px;width:196px"><span style="position:absolute;left:12px">Ordenar por Registro</span></div>
<div class="btn by" style="left:631px;width:113px"><span style="position:absolute;left:21px">Buscar...</span></div>
<div class="btn bg" style="left:752px;width:182px"><span style="position:absolute;left:15px">Ordenar  por fecha</span></div>
<div class="btn bg" style="left:934px;width:182px"><span style="position:absolute;left:11px">Ordenar  por puntos</span></div>
<svg style="position:absolute;left:1825px;top:475px" width="90" height="110" viewBox="0 0 90 110">
  <defs>
    <radialGradient id="hg" cx="0.35" cy="0.35" r="0.85" fx="0.3" fy="0.3"><stop offset="0" stop-color="#ffff40"/><stop offset="0.5" stop-color="#fbf200"/><stop offset="0.8" stop-color="#f6c800"/><stop offset="1" stop-color="#eaa000"/></radialGradient>
    <linearGradient id="pb" x1="0" y1="0" x2="0" y2="1"><stop offset="0" stop-color="#6e6e6e"/><stop offset="0.35" stop-color="#d0d0d0"/><stop offset="0.6" stop-color="#8a8a8a"/><stop offset="0.8" stop-color="#bdbdbd"/><stop offset="1" stop-color="#5a5a5a"/></linearGradient>
    <radialGradient id="pi" cx="0.5" cy="0.55" r="0.6"><stop offset="0" stop-color="#e8e8e8"/><stop offset="1" stop-color="#a8a8a8"/></radialGradient>
  </defs>
  <path d="M57 9 C65 10 71 17 75 27 C77.5 38 76.5 50 72 57 C67 63 60 66 54 66.5 C48 64 42 58 38.5 50 C36 42 36 30 38 22 C41 14 49 9 57 9Z" fill="url(#hg)" stroke="#fff" stroke-width="1.2"/>
  <path d="M50 12 C56 10 63 12 66 17 C60 15 54 15 50 12Z" fill="#fff6a0"/>
  <path d="M37.5 27 C37 18 42 14 48 15.5 C51.5 16.5 54 18.5 55 20.5 C57 16.5 61.5 15 64.5 17.5 C67.5 21 67.5 32 64 36.5 C60.5 39.5 56 38.5 52.5 36.5 C49 39.5 42.5 39.5 39.5 35.5 C38 33 37.5 30 37.5 27Z" fill="#fafafa" stroke="#7c7c5c" stroke-width="1"/>
  <ellipse cx="47" cy="32" rx="1.6" ry="2" fill="#1a1a1a"/>
  <ellipse cx="55" cy="31.5" rx="1.6" ry="2" fill="#1a1a1a"/>
  <path d="M43.5 44.5 C48 50 58 50 67.5 36.5" fill="none" stroke="#5e5200" stroke-width="1.5"/>
  <path d="M11 74 C10 66 20 60.5 32.5 60.5 C45 60.5 55 65 55.5 73 L54.5 87 C53.5 95 44 99.5 32.5 99.5 C21 99.5 12.5 95 11.5 87Z" fill="#fff"/>
  <path d="M13 76 L13.5 87 C14.5 94 22 98 32.5 98 C43 98 51 94 52.5 87 L53.5 76Z" fill="url(#pb)"/>
  <ellipse cx="33" cy="73" rx="21" ry="11.5" fill="#686868"/>
  <ellipse cx="33" cy="73.5" rx="18.5" ry="9.5" fill="url(#pi)"/>
  <ellipse cx="31.5" cy="78" rx="14" ry="7" fill="#fbfbfb"/>
  <ellipse cx="31" cy="77.5" rx="6" ry="5.2" fill="#f6be10"/>
  <path d="M52 67 L61 61 L62.5 79 L55 81Z" fill="#2a2a2a" stroke="#fff" stroke-width="0.8"/>
  <path d="M59 62 C65 57 74 59 75.5 65 C77 71 75 78 69 80 C64 81 60 78 59 73Z" fill="#fdfdfd" stroke="#8a8a8a" stroke-width="0.8"/>
  <path d="M64 66 L65 77 M68 65.5 L69 77 M72 66 L72 75" stroke="#b0b0b0" stroke-width="0.8"/>
</svg>
<div id="status"></div>
<div id="sbot"></div>
<div class="st" style="left:7px;color:#2f28c4">Listado de todos los comensales contenidos en el archivo actual.</div>
<div class="st2" style="left:755px">Registros: 23</div>
<div class="st2" style="left:880px">Alumnos: 31</div>
<div class="st2" style="left:1005px">josemanuelcruzmartinez</div>
</body></html>
